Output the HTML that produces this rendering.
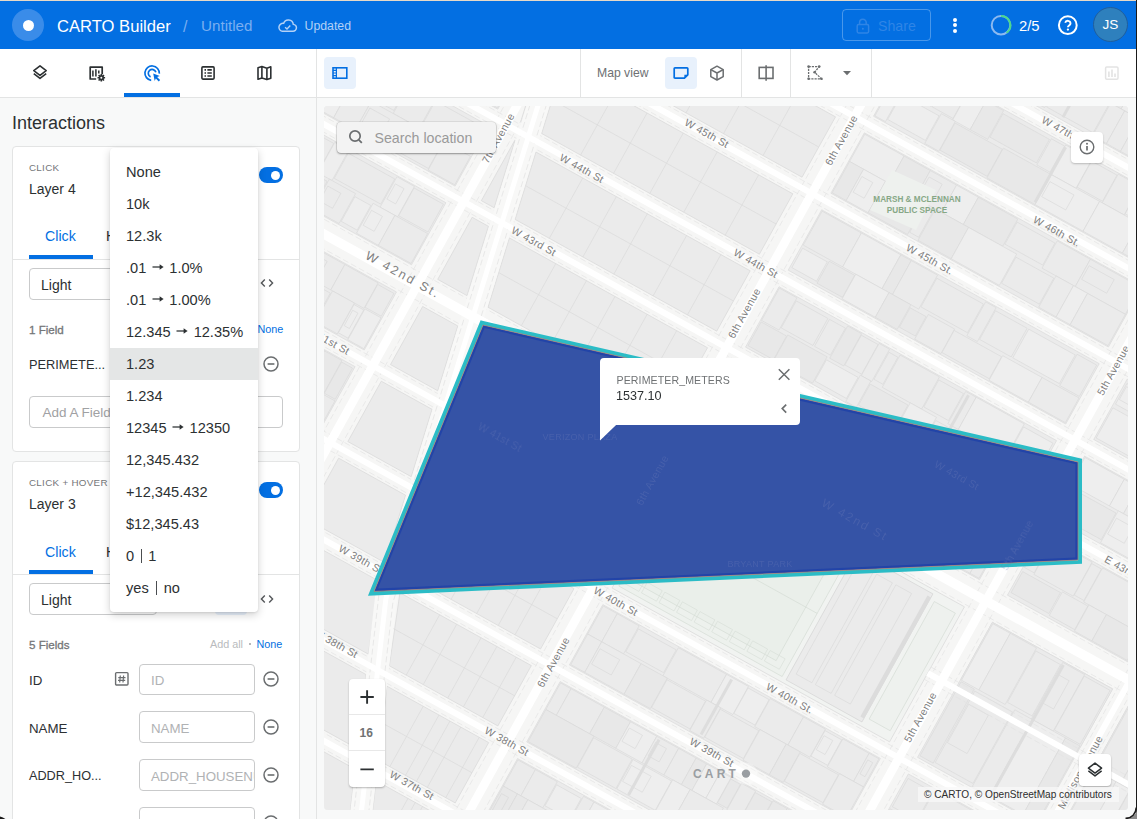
<!DOCTYPE html>
<html><head><meta charset="utf-8">
<style>
*{box-sizing:border-box;margin:0;padding:0}
html,body{width:1137px;height:819px;overflow:hidden;background:#f8f9f9;font-family:"Liberation Sans",sans-serif;color:#2c3032}
.a{position:absolute}
.t{position:absolute;white-space:nowrap;line-height:1}
#hdr{left:0;top:0;width:1137px;height:49px;background:#036fe2;border-top:1px solid #e6d9c8}
#tb{left:0;top:49px;width:1137px;height:49px;background:#fff;border-bottom:1px solid #e3e4e4}
.card{position:absolute;background:#fff;border:1px solid #e3e4e4;border-radius:4px}
.inp{position:absolute;border:1px solid #c9cacb;border-radius:4px;background:#fff}
.menu{position:absolute;left:110px;top:148px;width:148px;height:464px;background:#fff;border-radius:4px;box-shadow:0 3px 8px rgba(0,0,0,.18),0 1px 2px rgba(0,0,0,.08)}
.mi{position:absolute;left:16px;font-size:14.6px;color:#2c3032;line-height:1}
</style></head><body>
<!-- HEADER -->
<div id="hdr" class="a">
  <div class="a" style="left:12px;top:8px;width:32px;height:32px;border-radius:50%;background:#3a8ce9"></div>
  <div class="a" style="left:22.5px;top:18.5px;width:11px;height:11px;border-radius:50%;background:#fff"></div>
  <div class="t" style="left:57px;top:17.5px;font-size:16.6px;color:#fff">CARTO Builder</div>
  <div class="t" style="left:183px;top:18px;font-size:16px;color:#79aef0">/</div>
  <div class="t" style="left:201px;top:17px;font-size:15.2px;color:#79aef0">Untitled</div>
  <svg class="a" style="left:277px;top:18px" width="21" height="14" viewBox="0 0 21 14"><path d="M5.2 12.2h10.6a3.4 3.4 0 0 0 .5-6.8A5 5 0 0 0 6.6 4.4 3.9 3.9 0 0 0 5.2 12.2z" fill="none" stroke="#b3d1f6" stroke-width="1.45"/><path d="M8.1 8.2l1.9 1.8 3.3-3.4" fill="none" stroke="#b3d1f6" stroke-width="1.4"/></svg>
  <div class="t" style="left:304.5px;top:19px;font-size:12.3px;color:#b3d1f6">Updated</div>
  <div class="a" style="left:842px;top:8px;width:89px;height:32px;border:1px solid rgba(255,255,255,.28);border-radius:4px"></div>
  <svg class="a" style="left:856px;top:17px" width="14" height="16" viewBox="0 0 14 16"><rect x="1.2" y="6.6" width="11.4" height="8.4" rx="1.4" fill="none" stroke="#2f85e6" stroke-width="1.5"/><path d="M3.6 6.6V4.6a3.3 3.3 0 0 1 6.6 0v2" fill="none" stroke="#2f85e6" stroke-width="1.5"/><circle cx="6.9" cy="10.8" r="1" fill="#2f85e6"/></svg>
  <div class="t" style="left:878px;top:18px;font-size:14.2px;color:#2f85e6">Share</div>
  <div class="a" style="left:952.6px;top:16.6px;width:4px;height:4px;border-radius:50%;background:#fff"></div>
  <div class="a" style="left:952.6px;top:22.4px;width:4px;height:4px;border-radius:50%;background:#fff"></div>
  <div class="a" style="left:952.6px;top:28.3px;width:4px;height:4px;border-radius:50%;background:#fff"></div>
  <svg class="a" style="left:989px;top:12px" width="24" height="24" viewBox="0 0 24 24"><circle cx="12" cy="12.2" r="9.3" fill="none" stroke="#8cb9f0" stroke-width="2"/><path d="M12 2.9A9.3 9.3 0 0 1 17.5 19.7" fill="none" stroke="#4cd88c" stroke-width="2"/></svg>
  <div class="t" style="left:1019px;top:18px;font-size:14.8px;color:#fff">2/5</div>
  <svg class="a" style="left:1056px;top:12px" width="24" height="24" viewBox="0 0 24 24"><circle cx="11.8" cy="12.2" r="8.9" fill="none" stroke="#fff" stroke-width="2"/><path d="M9.2 9.8a2.7 2.7 0 0 1 5.3.7c0 1.8-2.6 2.2-2.6 3.7" fill="none" stroke="#fff" stroke-width="1.9"/><circle cx="11.9" cy="16.6" r="1.15" fill="#fff"/></svg>
  <div class="a" style="left:1092.5px;top:6px;width:35px;height:35px;border-radius:50%;background:#2e80bd;border:1px solid #1f5e9d"></div>
  <div class="t" style="left:1102.5px;top:16.5px;font-size:13.6px;color:#fff">JS</div>
</div>
<!-- TOOLBAR -->
<div id="tb" class="a"></div>
<div class="a" style="left:124px;top:93px;width:56px;height:4px;background:#036fe2"></div>
<div class="a" style="left:316px;top:49px;width:1px;height:770px;background:#e3e4e4"></div>
<svg class="a" style="left:0;top:49px" width="316" height="44" viewBox="0 49 316 44">
 <g fill="none" stroke="#2c3032" stroke-width="1.6" stroke-linejoin="round">
  <path d="M40 65.8l6.2 4.8-6.2 4.8-6.2-4.8z"/><path d="M33.8 73.6l6.2 4.8 6.2-4.8"/>
  <path d="M96.2 79H90.2V67.1h12v7.2" stroke-width="1.7"/><path d="M92.9 70.5v6M95.9 69.3v7.2M98.8 70.5v3" stroke-width="1.5"/>
  <rect x="201.9" y="66.9" width="12.2" height="12.2" rx="1" stroke-width="1.6"/>
  <path d="M204.5 69.9h1.5M204.5 73h1.5M204.5 76h1.5M207.4 69.9h4.4M207.4 73h4.4M207.4 76h4.4" stroke-width="1.7" stroke-linejoin="miter"/>
  <path d="M258 67.8l3.9-1.2 5 1.6 3.9-1.4v11.4l-3.9 1.4-5-1.6-3.9 1.3z M261.9 66.6v11.6 M266.9 68.2v11.4" stroke-width="1.6"/>
 </g>
 <g fill="#2c3032"><circle cx="101.3" cy="77.8" r="2.6"/></g>
 <g stroke="#2c3032" stroke-width="1.6"><path d="M101.3 74v7.6M97.5 77.8h7.6M98.6 75.1l5.4 5.4M104 75.1l-5.4 5.4"/></g>
 <circle cx="101.3" cy="77.8" r="1" fill="#fff"/>
 <g fill="none" stroke="#036fe2" stroke-width="1.7">
  <path d="M151.2 80.3A7.2 7.2 0 1 1 159.3 73.6"/>
  <path d="M150.6 76.9A3.9 3.9 0 1 1 155.9 72.2"/>
 </g>
 <path d="M153.2 73.4l6.6 2.6-2.7 1.1 3 3-1.3 1.3-3-3-1.1 2.7z" fill="#036fe2"/>
</svg>
<div class="a" style="left:324px;top:57px;width:32px;height:32px;border-radius:4px;background:#e8f1fc"></div>
<svg class="a" style="left:330px;top:64px" width="20" height="18" viewBox="330 64 20 18"><rect x="333" y="67.8" width="13.8" height="10.4" fill="none" stroke="#036fe2" stroke-width="1.6"/><path d="M336.4 67.8v10.4" stroke="#036fe2" stroke-width="1.2"/><path d="M333 70.4h3.4M333 73h3.4M333 75.6h3.4" stroke="#036fe2" stroke-width="1.1"/></svg>
<div class="a" style="left:580px;top:49px;width:1px;height:48px;background:#e3e4e4"></div>
<div class="t" style="left:597px;top:67px;font-size:12.2px;color:#6e7173">Map view</div>
<div class="a" style="left:665px;top:57px;width:32px;height:32px;border-radius:4px;background:#e8f1fc"></div>
<svg class="a" style="left:660px;top:56px" width="80" height="34" viewBox="660 56 80 34">
 <path d="M674.2 68.6a.8.8 0 0 1 .8-.8h12a.8.8 0 0 1 .8.8v6.2l-3.4 3.4H675a.8.8 0 0 1-.8-.8z" fill="none" stroke="#036fe2" stroke-width="1.7" stroke-linejoin="round"/>
 <path d="M684.4 78.2v-3.4h3.4z" fill="#036fe2"/>
 <g fill="none" stroke="#6b6e70" stroke-width="1.5" stroke-linejoin="round"><path d="M717 66.2l6.2 3.4v7l-6.2 3.4-6.2-3.4v-7z"/><path d="M710.8 69.6l6.2 3.4 6.2-3.4M717 73v6.9"/></g>
</svg>
<div class="a" style="left:741px;top:49px;width:1px;height:48px;background:#e3e4e4"></div>
<svg class="a" style="left:750px;top:56px" width="120" height="34" viewBox="750 56 120 34">
 <g fill="none" stroke="#6b6e70" stroke-width="1.6"><rect x="759.2" y="67.4" width="13.8" height="11"/><path d="M766.1 65.3v15.4"/></g>
 <g fill="none" stroke="#6b6e70" stroke-width="1.3" stroke-dasharray="2.2 1"><path d="M808.6 66.6h10.6L814.6 72.2l6.8 6.6H808.6z"/></g>
 <g fill="#6b6e70"><circle cx="808.6" cy="66.6" r="1.3"/><circle cx="819.2" cy="66.6" r="1.3"/><circle cx="814.6" cy="72.2" r="1.3"/><circle cx="821.4" cy="78.8" r="1.3"/><circle cx="808.6" cy="78.8" r="1.3"/></g>
 <path d="M843 71h8l-4 4.2z" fill="#6b6e70"/>
</svg>
<div class="a" style="left:790px;top:49px;width:1px;height:48px;background:#e3e4e4"></div>
<div class="a" style="left:871px;top:49px;width:1px;height:48px;background:#e3e4e4"></div>
<svg class="a" style="left:1100px;top:62px" width="24" height="22" viewBox="1100 62 24 22"><rect x="1105.6" y="66.9" width="12.4" height="12.4" rx="1.2" fill="none" stroke="#e3e3e3" stroke-width="1.5"/><path d="M1108.9 71.4v5.5M1112 69.6v7.3M1115 73.6v3.3" stroke="#e3e3e3" stroke-width="1.6"/></svg>
<div class="a" style="left:1136px;top:0;width:1px;height:819px;background:#1a1a1a"></div>
<!-- SIDEBAR -->
<div class="t" style="left:12px;top:114px;font-size:18px;color:#2c3032">Interactions</div>
<div class="card" style="left:12px;top:146px;width:288px;height:306px"></div>
<div class="t" style="left:29px;top:163px;font-size:9.8px;letter-spacing:.3px;color:#747678">CLICK</div>
<div class="t" style="left:29px;top:181.5px;font-size:14px;color:#2c3032">Layer 4</div>
<div class="a" style="left:259px;top:167px;width:24px;height:16px;border-radius:8px;background:#036fe2"></div><div class="a" style="left:270.5px;top:170.5px;width:9px;height:9px;border-radius:50%;background:#fff"></div>
<div class="t" style="left:45px;top:229px;font-size:14.2px;color:#036fe2">Click</div>
<div class="t" style="left:106px;top:229px;font-size:14.2px;color:#2c3032">Hover</div>
<div class="a" style="left:29px;top:255px;width:64px;height:4px;background:#036fe2"></div>
<div class="a" style="left:13px;top:259px;width:286px;height:1px;background:#e3e4e4"></div>
<div class="inp" style="left:29px;top:268px;width:128px;height:32px"></div>
<div class="t" style="left:41px;top:277.8px;font-size:14px;color:#2c3032">Light</div>
<div class="a" style="left:215px;top:268px;width:32px;height:31px;border-radius:4px;background:#e8f1fc"></div>
<svg class="a" style="left:258px;top:274px" width="18" height="18" viewBox="0 0 18 18"><path d="M6.8 5.4L3.4 9l3.4 3.6M11.2 5.4L14.6 9l-3.4 3.6" fill="none" stroke="#55585b" stroke-width="1.4"/></svg>
<div class="t" style="left:29px;top:323.5px;font-size:11.6px;color:#747678;-webkit-text-stroke:.3px #747678">1 Field</div>
<div class="t" style="left:257.5px;top:323.5px;font-size:10.8px;color:#036fe2">None</div>
<div class="t" style="left:29px;top:358.5px;font-size:12.8px;color:#2c3032">PERIMETE...</div>
<svg class="a" style="left:262px;top:355px" width="18" height="18" viewBox="0 0 18 18"><circle cx="9" cy="9" r="7" fill="none" stroke="#6b6e70" stroke-width="1.5"/><path d="M5.6 9h6.8" stroke="#6b6e70" stroke-width="1.6"/></svg>
<div class="inp" style="left:29px;top:396px;width:254px;height:31.5px"></div>
<div class="t" style="left:42.5px;top:405.5px;font-size:13.5px;color:#9fa1a3">Add A Field</div>

<div class="card" style="left:12px;top:461px;width:288px;height:400px"></div>
<div class="t" style="left:29px;top:478px;font-size:9.8px;letter-spacing:.3px;color:#747678">CLICK + HOVER</div>
<div class="t" style="left:29px;top:496.5px;font-size:14px;color:#2c3032">Layer 3</div>
<div class="a" style="left:259px;top:482px;width:24px;height:16px;border-radius:8px;background:#036fe2"></div><div class="a" style="left:270.5px;top:485.5px;width:9px;height:9px;border-radius:50%;background:#fff"></div>
<div class="t" style="left:45px;top:544.5px;font-size:14.2px;color:#036fe2">Click</div>
<div class="t" style="left:106px;top:544.5px;font-size:14.2px;color:#2c3032">Hover</div>
<div class="a" style="left:29px;top:570px;width:64px;height:4px;background:#036fe2"></div>
<div class="a" style="left:13px;top:574px;width:286px;height:1px;background:#e3e4e4"></div>
<div class="inp" style="left:29px;top:583px;width:128px;height:32px"></div>
<div class="t" style="left:41px;top:592.8px;font-size:14px;color:#2c3032">Light</div>
<div class="a" style="left:215px;top:583px;width:32px;height:32px;border-radius:4px;background:#e8f1fc"></div>
<svg class="a" style="left:258px;top:589.5px" width="18" height="18" viewBox="0 0 18 18"><path d="M6.8 5.4L3.4 9l3.4 3.6M11.2 5.4L14.6 9l-3.4 3.6" fill="none" stroke="#55585b" stroke-width="1.4"/></svg>
<div class="t" style="left:29px;top:638.5px;font-size:11.6px;color:#747678;-webkit-text-stroke:.3px #747678">5 Fields</div>
<div class="t" style="left:210px;top:638.5px;font-size:10.8px;color:#b9bbbd">Add all</div>
<div class="a" style="left:249.3px;top:643px;width:2px;height:2px;border-radius:1px;background:#9fa1a3"></div>
<div class="t" style="left:256.5px;top:638.5px;font-size:10.8px;color:#036fe2">None</div>
<div class="t" style="left:29px;top:674px;font-size:13.3px;color:#2c3032">ID</div>
<svg class="a" style="left:113px;top:670px" width="18" height="18" viewBox="0 0 18 18"><rect x="2.6" y="2.6" width="12.4" height="12.4" rx="1" fill="none" stroke="#6b6e70" stroke-width="1.4"/><path d="M7.3 5.5l-.6 7M10.6 5.5l-.6 7M5.3 7.7h7.2M5 10.4h7.2" stroke="#6b6e70" stroke-width="1.2"/></svg>
<div class="inp" style="left:139px;top:663.5px;width:116px;height:31px"></div>
<div class="t" style="left:151px;top:673.5px;font-size:13.3px;color:#b0b2b4">ID</div>
<svg class="a" style="left:262px;top:670px" width="18" height="18" viewBox="0 0 18 18"><circle cx="9" cy="9" r="7" fill="none" stroke="#6b6e70" stroke-width="1.5"/><path d="M5.6 9h6.8" stroke="#6b6e70" stroke-width="1.6"/></svg>
<div class="t" style="left:29px;top:722px;font-size:13.3px;color:#2c3032">NAME</div>
<div class="inp" style="left:139px;top:711px;width:116px;height:32px"></div>
<div class="t" style="left:151px;top:721.5px;font-size:13.3px;color:#b0b2b4">NAME</div>
<svg class="a" style="left:262px;top:718px" width="18" height="18" viewBox="0 0 18 18"><circle cx="9" cy="9" r="7" fill="none" stroke="#6b6e70" stroke-width="1.5"/><path d="M5.6 9h6.8" stroke="#6b6e70" stroke-width="1.6"/></svg>
<div class="t" style="left:29px;top:770px;font-size:12.7px;color:#2c3032">ADDR_HO...</div>
<div class="inp" style="left:139px;top:759px;width:116px;height:32px;overflow:hidden"><div class="t" style="left:11px;top:10px;font-size:13.3px;color:#b0b2b4">ADDR_HOUSENUMBER</div></div>
<svg class="a" style="left:262px;top:766px" width="18" height="18" viewBox="0 0 18 18"><circle cx="9" cy="9" r="7" fill="none" stroke="#6b6e70" stroke-width="1.5"/><path d="M5.6 9h6.8" stroke="#6b6e70" stroke-width="1.6"/></svg>
<div class="t" style="left:29px;top:818px;font-size:12.7px;color:#2c3032">ADDR_ST...</div>
<div class="inp" style="left:139px;top:807px;width:116px;height:32px;overflow:hidden"><div class="t" style="left:11px;top:10px;font-size:13.3px;color:#b0b2b4">ADDR_STREET</div></div>
<svg class="a" style="left:262px;top:814px" width="18" height="18" viewBox="0 0 18 18"><circle cx="9" cy="9" r="7" fill="none" stroke="#6b6e70" stroke-width="1.5"/><path d="M5.6 9h6.8" stroke="#6b6e70" stroke-width="1.6"/></svg>

<!-- MAP -->
<div id="map" class="a" style="left:324px;top:106px;width:804px;height:704px;border-radius:4px;background:#ebebeb;overflow:hidden">
<svg class="a" style="left:0;top:0" width="804" height="704" viewBox="324 106 804 704">
<g transform="translate(680.0,431.4) rotate(29)">
<rect x="-900" y="-900" width="1800" height="1800" fill="#f6f6f5"/>
<rect x="-584.0" y="-526.5" width="268.4" height="69.0" fill="#ebebeb" stroke="#dcdcdc" stroke-width="0.7"/>
<rect x="-582.1" y="-522.5" width="53.2" height="27.0" fill="#e8e8e8" stroke="#d9d9d9" stroke-width="0.6"/>
<rect x="-527.1" y="-522.5" width="23.2" height="27.0" fill="#ebebeb" stroke="#d9d9d9" stroke-width="0.6"/>
<rect x="-502.6" y="-524.0" width="19.1" height="30.0" fill="#ebebeb" stroke="#d9d9d9" stroke-width="0.6"/>
<rect x="-483.0" y="-525.5" width="16.0" height="33.0" fill="#eeeeee" stroke="#d9d9d9" stroke-width="0.6"/>
<rect x="-466.1" y="-522.5" width="43.2" height="27.0" fill="#e8e8e8" stroke="#d9d9d9" stroke-width="0.6"/>
<rect x="-422.0" y="-525.5" width="12.0" height="33.0" fill="#eeeeee" stroke="#d9d9d9" stroke-width="0.6"/>
<rect x="-420.0" y="-518.9" width="6.0" height="16.5" fill="none" stroke="#d6d6d6" stroke-width="0.5"/>
<rect x="-409.1" y="-522.5" width="23.2" height="27.0" fill="#ebebeb" stroke="#d9d9d9" stroke-width="0.6"/>
<rect x="-408.0" y="-518.9" width="12.5" height="16.5" fill="none" stroke="#d6d6d6" stroke-width="0.5"/>
<rect x="-384.6" y="-524.0" width="54.1" height="30.0" fill="#ebebeb" stroke="#d9d9d9" stroke-width="0.6"/>
<rect x="-330.0" y="-525.5" width="13.4" height="33.0" fill="#eeeeee" stroke="#d9d9d9" stroke-width="0.6"/>
<rect x="-583.0" y="-492.5" width="55.0" height="34.0" fill="#ebebeb" stroke="#d9d9d9" stroke-width="0.6"/>
<rect x="-527.1" y="-489.5" width="28.2" height="28.0" fill="#e8e8e8" stroke="#d9d9d9" stroke-width="0.6"/>
<rect x="-498.0" y="-492.5" width="16.0" height="34.0" fill="#ebebeb" stroke="#d9d9d9" stroke-width="0.6"/>
<rect x="-482.0" y="-492.5" width="30.0" height="34.0" fill="#ebebeb" stroke="#d9d9d9" stroke-width="0.6"/>
<rect x="-452.0" y="-492.5" width="16.0" height="34.0" fill="#e8e8e8" stroke="#d9d9d9" stroke-width="0.6"/>
<rect x="-436.0" y="-492.5" width="45.0" height="34.0" fill="#ebebeb" stroke="#d9d9d9" stroke-width="0.6"/>
<rect x="-391.0" y="-492.5" width="12.0" height="34.0" fill="#ebebeb" stroke="#d9d9d9" stroke-width="0.6"/>
<rect x="-378.6" y="-491.0" width="11.1" height="31.0" fill="#e8e8e8" stroke="#d9d9d9" stroke-width="0.6"/>
<rect x="-367.0" y="-492.5" width="50.4" height="34.0" fill="#e8e8e8" stroke="#d9d9d9" stroke-width="0.6"/>
<rect x="-421.6" y="-523.5" width="3.0" height="63.0" fill="#dddddd" stroke="none" stroke-width="0.7"/>
<polygon points="-285.6,-526.5 -359.4,-526.5 -344.9,-457.5 -285.6,-457.5" fill="#ebebeb" stroke="#dadada" stroke-width=".7"/>
<polygon points="-335.4,-526.5 -16.5,-526.5 -16.5,-457.5 -320.9,-457.5" fill="#ebebeb" stroke="#dadada" stroke-width=".7"/>
<path d="M-271.8 -526.5V-457.5" stroke="#d9d9d9" stroke-width=".6"/>
<path d="M-221.3 -526.5V-457.5" stroke="#d9d9d9" stroke-width=".6"/>
<path d="M-173.5 -526.5V-457.5" stroke="#d9d9d9" stroke-width=".6"/>
<path d="M-118.9 -526.5V-457.5" stroke="#d9d9d9" stroke-width=".6"/>
<path d="M-63.0 -526.5V-457.5" stroke="#d9d9d9" stroke-width=".6"/>
<path d="M-327.4 -492.0H-16.5" stroke="#d9d9d9" stroke-width=".6"/>
<rect x="16.5" y="-526.5" width="317.3" height="69.0" fill="#ebebeb" stroke="#dcdcdc" stroke-width="0.7"/>
<rect x="17.5" y="-525.5" width="16.0" height="29.6" fill="#ebebeb" stroke="#d9d9d9" stroke-width="0.6"/>
<rect x="34.4" y="-522.5" width="53.2" height="23.6" fill="#ebebeb" stroke="#d9d9d9" stroke-width="0.6"/>
<rect x="89.0" y="-524.0" width="24.1" height="26.6" fill="#ebebeb" stroke="#d9d9d9" stroke-width="0.6"/>
<rect x="114.0" y="-524.0" width="15.1" height="26.6" fill="#e8e8e8" stroke="#d9d9d9" stroke-width="0.6"/>
<rect x="130.4" y="-522.5" width="10.2" height="23.6" fill="#ebebeb" stroke="#d9d9d9" stroke-width="0.6"/>
<rect x="141.5" y="-525.5" width="12.0" height="29.6" fill="#ebebeb" stroke="#d9d9d9" stroke-width="0.6"/>
<rect x="153.5" y="-525.5" width="16.0" height="29.6" fill="#ebebeb" stroke="#d9d9d9" stroke-width="0.6"/>
<rect x="170.4" y="-522.5" width="28.2" height="23.6" fill="#ebebeb" stroke="#d9d9d9" stroke-width="0.6"/>
<rect x="199.5" y="-525.5" width="30.0" height="29.6" fill="#e8e8e8" stroke="#d9d9d9" stroke-width="0.6"/>
<rect x="201.5" y="-519.6" width="15.0" height="14.8" fill="none" stroke="#d6d6d6" stroke-width="0.5"/>
<rect x="229.5" y="-525.5" width="25.0" height="29.6" fill="#eeeeee" stroke="#d9d9d9" stroke-width="0.6"/>
<rect x="231.5" y="-519.6" width="12.5" height="14.8" fill="none" stroke="#d6d6d6" stroke-width="0.5"/>
<rect x="255.4" y="-522.5" width="36.2" height="23.6" fill="#ebebeb" stroke="#d9d9d9" stroke-width="0.6"/>
<rect x="292.5" y="-525.5" width="40.3" height="29.6" fill="#eeeeee" stroke="#d9d9d9" stroke-width="0.6"/>
<rect x="17.5" y="-495.9" width="20.0" height="37.4" fill="#ebebeb" stroke="#d9d9d9" stroke-width="0.6"/>
<rect x="37.5" y="-495.9" width="25.0" height="37.4" fill="#ebebeb" stroke="#d9d9d9" stroke-width="0.6"/>
<rect x="63.0" y="-494.4" width="24.1" height="34.4" fill="#e8e8e8" stroke="#d9d9d9" stroke-width="0.6"/>
<rect x="87.5" y="-495.9" width="45.0" height="37.4" fill="#ebebeb" stroke="#d9d9d9" stroke-width="0.6"/>
<rect x="89.5" y="-488.4" width="22.5" height="18.7" fill="none" stroke="#d6d6d6" stroke-width="0.5"/>
<rect x="132.9" y="-494.4" width="29.1" height="34.4" fill="#ebebeb" stroke="#d9d9d9" stroke-width="0.6"/>
<rect x="163.4" y="-492.9" width="53.2" height="31.4" fill="#ebebeb" stroke="#d9d9d9" stroke-width="0.6"/>
<rect x="217.5" y="-495.9" width="16.0" height="37.4" fill="#ebebeb" stroke="#d9d9d9" stroke-width="0.6"/>
<rect x="233.5" y="-495.9" width="16.0" height="37.4" fill="#ebebeb" stroke="#d9d9d9" stroke-width="0.6"/>
<rect x="249.5" y="-495.9" width="25.0" height="37.4" fill="#ebebeb" stroke="#d9d9d9" stroke-width="0.6"/>
<rect x="274.5" y="-495.9" width="58.3" height="37.4" fill="#ebebeb" stroke="#d9d9d9" stroke-width="0.6"/>
<rect x="276.5" y="-488.4" width="29.2" height="18.7" fill="none" stroke="#d6d6d6" stroke-width="0.5"/>
<rect x="181.1" y="-523.5" width="3.0" height="63.0" fill="#dddddd" stroke="none" stroke-width="0.7"/>
<rect x="365.8" y="-526.5" width="137.4" height="69.0" fill="#ebebeb" stroke="#dcdcdc" stroke-width="0.7"/>
<rect x="366.8" y="-525.5" width="16.0" height="38.6" fill="#ebebeb" stroke="#d9d9d9" stroke-width="0.6"/>
<rect x="383.7" y="-522.5" width="36.2" height="32.6" fill="#eeeeee" stroke="#d9d9d9" stroke-width="0.6"/>
<rect x="421.2" y="-524.0" width="11.1" height="35.6" fill="#ebebeb" stroke="#d9d9d9" stroke-width="0.6"/>
<rect x="432.8" y="-525.5" width="30.0" height="38.6" fill="#ebebeb" stroke="#d9d9d9" stroke-width="0.6"/>
<rect x="462.8" y="-525.5" width="16.0" height="38.6" fill="#e8e8e8" stroke="#d9d9d9" stroke-width="0.6"/>
<rect x="478.8" y="-525.5" width="23.4" height="38.6" fill="#ebebeb" stroke="#d9d9d9" stroke-width="0.6"/>
<rect x="480.8" y="-517.8" width="11.7" height="19.3" fill="none" stroke="#d6d6d6" stroke-width="0.5"/>
<rect x="366.8" y="-486.9" width="38.0" height="28.4" fill="#ebebeb" stroke="#d9d9d9" stroke-width="0.6"/>
<rect x="404.8" y="-486.9" width="38.0" height="28.4" fill="#ebebeb" stroke="#d9d9d9" stroke-width="0.6"/>
<rect x="442.8" y="-486.9" width="16.0" height="28.4" fill="#e8e8e8" stroke="#d9d9d9" stroke-width="0.6"/>
<rect x="459.2" y="-485.4" width="11.1" height="25.4" fill="#eeeeee" stroke="#d9d9d9" stroke-width="0.6"/>
<rect x="470.8" y="-486.9" width="12.0" height="28.4" fill="#eeeeee" stroke="#d9d9d9" stroke-width="0.6"/>
<rect x="472.8" y="-481.2" width="6.0" height="14.2" fill="none" stroke="#d6d6d6" stroke-width="0.5"/>
<rect x="483.2" y="-485.4" width="18.5" height="25.4" fill="#ebebeb" stroke="#d9d9d9" stroke-width="0.6"/>
<rect x="453.9" y="-523.5" width="3.0" height="63.0" fill="#dddddd" stroke="none" stroke-width="0.7"/>
<rect x="525.2" y="-526.5" width="140.8" height="69.0" fill="#ebebeb" stroke="#dcdcdc" stroke-width="0.7"/>
<rect x="527.1" y="-522.5" width="53.2" height="28.4" fill="#e8e8e8" stroke="#d9d9d9" stroke-width="0.6"/>
<rect x="528.2" y="-518.6" width="27.5" height="17.2" fill="none" stroke="#d6d6d6" stroke-width="0.5"/>
<rect x="582.1" y="-522.5" width="10.2" height="28.4" fill="#ebebeb" stroke="#d9d9d9" stroke-width="0.6"/>
<rect x="583.2" y="-518.6" width="6.0" height="17.2" fill="none" stroke="#d6d6d6" stroke-width="0.5"/>
<rect x="593.2" y="-525.5" width="12.0" height="34.4" fill="#ebebeb" stroke="#d9d9d9" stroke-width="0.6"/>
<rect x="605.2" y="-525.5" width="59.8" height="34.4" fill="#ebebeb" stroke="#d9d9d9" stroke-width="0.6"/>
<rect x="526.2" y="-491.1" width="20.0" height="32.6" fill="#eeeeee" stroke="#d9d9d9" stroke-width="0.6"/>
<rect x="546.7" y="-489.6" width="37.1" height="29.6" fill="#e8e8e8" stroke="#d9d9d9" stroke-width="0.6"/>
<rect x="584.2" y="-491.1" width="38.0" height="32.6" fill="#e8e8e8" stroke="#d9d9d9" stroke-width="0.6"/>
<rect x="622.2" y="-491.1" width="42.8" height="32.6" fill="#ebebeb" stroke="#d9d9d9" stroke-width="0.6"/>
<rect x="-584.0" y="-438.5" width="268.4" height="69.0" fill="#ebebeb" stroke="#dcdcdc" stroke-width="0.7"/>
<rect x="-582.5" y="-436.0" width="19.1" height="28.5" fill="#ebebeb" stroke="#d9d9d9" stroke-width="0.6"/>
<rect x="-563.0" y="-437.5" width="12.0" height="31.5" fill="#ebebeb" stroke="#d9d9d9" stroke-width="0.6"/>
<rect x="-550.5" y="-436.0" width="15.1" height="28.5" fill="#e8e8e8" stroke="#d9d9d9" stroke-width="0.6"/>
<rect x="-534.5" y="-436.0" width="24.1" height="28.5" fill="#e8e8e8" stroke="#d9d9d9" stroke-width="0.6"/>
<rect x="-509.1" y="-434.5" width="53.2" height="25.5" fill="#ebebeb" stroke="#d9d9d9" stroke-width="0.6"/>
<rect x="-455.0" y="-437.5" width="16.0" height="31.5" fill="#ebebeb" stroke="#d9d9d9" stroke-width="0.6"/>
<rect x="-438.1" y="-434.5" width="10.2" height="25.5" fill="#ebebeb" stroke="#d9d9d9" stroke-width="0.6"/>
<rect x="-426.6" y="-436.0" width="11.1" height="28.5" fill="#ebebeb" stroke="#d9d9d9" stroke-width="0.6"/>
<rect x="-415.0" y="-437.5" width="12.0" height="31.5" fill="#ebebeb" stroke="#d9d9d9" stroke-width="0.6"/>
<rect x="-402.6" y="-436.0" width="11.1" height="28.5" fill="#ebebeb" stroke="#d9d9d9" stroke-width="0.6"/>
<rect x="-401.0" y="-431.2" width="6.0" height="15.8" fill="none" stroke="#d6d6d6" stroke-width="0.5"/>
<rect x="-391.0" y="-437.5" width="38.0" height="31.5" fill="#ebebeb" stroke="#d9d9d9" stroke-width="0.6"/>
<rect x="-353.0" y="-437.5" width="36.4" height="31.5" fill="#ebebeb" stroke="#d9d9d9" stroke-width="0.6"/>
<rect x="-583.0" y="-406.0" width="55.0" height="35.5" fill="#eeeeee" stroke="#d9d9d9" stroke-width="0.6"/>
<rect x="-527.1" y="-403.0" width="28.2" height="29.5" fill="#ebebeb" stroke="#d9d9d9" stroke-width="0.6"/>
<rect x="-498.0" y="-406.0" width="20.0" height="35.5" fill="#e8e8e8" stroke="#d9d9d9" stroke-width="0.6"/>
<rect x="-496.0" y="-398.9" width="10.0" height="17.7" fill="none" stroke="#d6d6d6" stroke-width="0.5"/>
<rect x="-477.6" y="-404.5" width="44.1" height="32.5" fill="#ebebeb" stroke="#d9d9d9" stroke-width="0.6"/>
<rect x="-432.1" y="-403.0" width="10.2" height="29.5" fill="#e8e8e8" stroke="#d9d9d9" stroke-width="0.6"/>
<rect x="-421.0" y="-406.0" width="38.0" height="35.5" fill="#e8e8e8" stroke="#d9d9d9" stroke-width="0.6"/>
<rect x="-383.0" y="-406.0" width="25.0" height="35.5" fill="#ebebeb" stroke="#d9d9d9" stroke-width="0.6"/>
<rect x="-358.0" y="-406.0" width="41.4" height="35.5" fill="#ebebeb" stroke="#d9d9d9" stroke-width="0.6"/>
<polygon points="-285.6,-438.5 -340.9,-438.5 -326.4,-369.5 -285.6,-369.5" fill="#ebebeb" stroke="#dadada" stroke-width=".7"/>
<polygon points="-316.9,-438.5 -16.5,-438.5 -16.5,-369.5 -302.4,-369.5" fill="#ebebeb" stroke="#dadada" stroke-width=".7"/>
<path d="M-256.5 -438.5V-369.5" stroke="#d9d9d9" stroke-width=".6"/>
<path d="M-203.0 -438.5V-369.5" stroke="#d9d9d9" stroke-width=".6"/>
<path d="M-155.9 -438.5V-369.5" stroke="#d9d9d9" stroke-width=".6"/>
<path d="M-113.3 -438.5V-369.5" stroke="#d9d9d9" stroke-width=".6"/>
<path d="M-68.3 -438.5V-369.5" stroke="#d9d9d9" stroke-width=".6"/>
<path d="M-308.9 -404.0H-16.5" stroke="#d9d9d9" stroke-width=".6"/>
<rect x="16.5" y="-438.5" width="317.3" height="69.0" fill="#ebebeb" stroke="#dcdcdc" stroke-width="0.7"/>
<rect x="17.9" y="-436.0" width="44.1" height="29.9" fill="#ebebeb" stroke="#d9d9d9" stroke-width="0.6"/>
<rect x="63.0" y="-436.0" width="24.1" height="29.9" fill="#ebebeb" stroke="#d9d9d9" stroke-width="0.6"/>
<rect x="87.5" y="-437.5" width="20.0" height="32.9" fill="#eeeeee" stroke="#d9d9d9" stroke-width="0.6"/>
<rect x="107.5" y="-437.5" width="20.0" height="32.9" fill="#e8e8e8" stroke="#d9d9d9" stroke-width="0.6"/>
<rect x="128.4" y="-434.5" width="53.2" height="26.9" fill="#e8e8e8" stroke="#d9d9d9" stroke-width="0.6"/>
<rect x="182.9" y="-436.0" width="15.1" height="29.9" fill="#ebebeb" stroke="#d9d9d9" stroke-width="0.6"/>
<rect x="198.5" y="-437.5" width="30.0" height="32.9" fill="#eeeeee" stroke="#d9d9d9" stroke-width="0.6"/>
<rect x="228.9" y="-436.0" width="29.1" height="29.9" fill="#ebebeb" stroke="#d9d9d9" stroke-width="0.6"/>
<rect x="258.5" y="-437.5" width="25.0" height="32.9" fill="#ebebeb" stroke="#d9d9d9" stroke-width="0.6"/>
<rect x="283.9" y="-436.0" width="29.1" height="29.9" fill="#eeeeee" stroke="#d9d9d9" stroke-width="0.6"/>
<rect x="313.5" y="-437.5" width="19.3" height="32.9" fill="#eeeeee" stroke="#d9d9d9" stroke-width="0.6"/>
<rect x="17.5" y="-404.6" width="12.0" height="34.1" fill="#eeeeee" stroke="#d9d9d9" stroke-width="0.6"/>
<rect x="30.4" y="-401.6" width="43.2" height="28.1" fill="#eeeeee" stroke="#d9d9d9" stroke-width="0.6"/>
<rect x="74.5" y="-404.6" width="16.0" height="34.1" fill="#ebebeb" stroke="#d9d9d9" stroke-width="0.6"/>
<rect x="91.0" y="-403.1" width="54.1" height="31.1" fill="#e8e8e8" stroke="#d9d9d9" stroke-width="0.6"/>
<rect x="145.5" y="-404.6" width="55.0" height="34.1" fill="#e8e8e8" stroke="#d9d9d9" stroke-width="0.6"/>
<rect x="200.5" y="-404.6" width="55.0" height="34.1" fill="#eeeeee" stroke="#d9d9d9" stroke-width="0.6"/>
<rect x="202.5" y="-397.8" width="27.5" height="17.1" fill="none" stroke="#d6d6d6" stroke-width="0.5"/>
<rect x="255.5" y="-404.6" width="45.0" height="34.1" fill="#eeeeee" stroke="#d9d9d9" stroke-width="0.6"/>
<rect x="300.5" y="-404.6" width="20.0" height="34.1" fill="#ebebeb" stroke="#d9d9d9" stroke-width="0.6"/>
<rect x="320.5" y="-404.6" width="12.3" height="34.1" fill="#ebebeb" stroke="#d9d9d9" stroke-width="0.6"/>
<rect x="198.0" y="-435.5" width="3.0" height="63.0" fill="#dddddd" stroke="none" stroke-width="0.7"/>
<rect x="365.8" y="-438.5" width="137.4" height="69.0" fill="#ebebeb" stroke="#dcdcdc" stroke-width="0.7"/>
<rect x="367.7" y="-434.5" width="14.2" height="23.3" fill="#eeeeee" stroke="#d9d9d9" stroke-width="0.6"/>
<rect x="383.2" y="-436.0" width="24.1" height="26.3" fill="#eeeeee" stroke="#d9d9d9" stroke-width="0.6"/>
<rect x="384.8" y="-431.6" width="12.5" height="14.6" fill="none" stroke="#d6d6d6" stroke-width="0.5"/>
<rect x="408.7" y="-434.5" width="43.2" height="23.3" fill="#eeeeee" stroke="#d9d9d9" stroke-width="0.6"/>
<rect x="452.8" y="-437.5" width="25.0" height="29.3" fill="#eeeeee" stroke="#d9d9d9" stroke-width="0.6"/>
<rect x="477.8" y="-437.5" width="24.4" height="29.3" fill="#ebebeb" stroke="#d9d9d9" stroke-width="0.6"/>
<rect x="366.8" y="-408.2" width="38.0" height="37.7" fill="#eeeeee" stroke="#d9d9d9" stroke-width="0.6"/>
<rect x="404.8" y="-408.2" width="25.0" height="37.7" fill="#ebebeb" stroke="#d9d9d9" stroke-width="0.6"/>
<rect x="429.8" y="-408.2" width="20.0" height="37.7" fill="#ebebeb" stroke="#d9d9d9" stroke-width="0.6"/>
<rect x="449.8" y="-408.2" width="30.0" height="37.7" fill="#e8e8e8" stroke="#d9d9d9" stroke-width="0.6"/>
<rect x="479.8" y="-408.2" width="22.4" height="37.7" fill="#eeeeee" stroke="#d9d9d9" stroke-width="0.6"/>
<rect x="525.2" y="-438.5" width="140.8" height="69.0" fill="#ebebeb" stroke="#dcdcdc" stroke-width="0.7"/>
<rect x="527.1" y="-434.5" width="14.2" height="30.7" fill="#ebebeb" stroke="#d9d9d9" stroke-width="0.6"/>
<rect x="543.1" y="-434.5" width="36.2" height="30.7" fill="#ebebeb" stroke="#d9d9d9" stroke-width="0.6"/>
<rect x="580.2" y="-437.5" width="38.0" height="36.7" fill="#eeeeee" stroke="#d9d9d9" stroke-width="0.6"/>
<rect x="618.2" y="-437.5" width="46.8" height="36.7" fill="#ebebeb" stroke="#d9d9d9" stroke-width="0.6"/>
<rect x="620.2" y="-430.2" width="23.4" height="18.4" fill="none" stroke="#d6d6d6" stroke-width="0.5"/>
<rect x="526.2" y="-400.8" width="55.0" height="30.3" fill="#ebebeb" stroke="#d9d9d9" stroke-width="0.6"/>
<rect x="581.2" y="-400.8" width="25.0" height="30.3" fill="#ebebeb" stroke="#d9d9d9" stroke-width="0.6"/>
<rect x="606.2" y="-400.8" width="16.0" height="30.3" fill="#eeeeee" stroke="#d9d9d9" stroke-width="0.6"/>
<rect x="622.2" y="-400.8" width="42.8" height="30.3" fill="#ebebeb" stroke="#d9d9d9" stroke-width="0.6"/>
<rect x="596.9" y="-435.5" width="3.0" height="63.0" fill="#dddddd" stroke="none" stroke-width="0.7"/>
<rect x="-584.0" y="-350.5" width="268.4" height="69.0" fill="#ebebeb" stroke="#dcdcdc" stroke-width="0.7"/>
<rect x="-583.0" y="-349.5" width="38.0" height="32.8" fill="#ebebeb" stroke="#d9d9d9" stroke-width="0.6"/>
<rect x="-544.5" y="-348.0" width="19.1" height="29.8" fill="#e8e8e8" stroke="#d9d9d9" stroke-width="0.6"/>
<rect x="-525.0" y="-349.5" width="38.0" height="32.8" fill="#e8e8e8" stroke="#d9d9d9" stroke-width="0.6"/>
<rect x="-487.0" y="-349.5" width="16.0" height="32.8" fill="#eeeeee" stroke="#d9d9d9" stroke-width="0.6"/>
<rect x="-470.1" y="-346.5" width="14.2" height="26.8" fill="#e8e8e8" stroke="#d9d9d9" stroke-width="0.6"/>
<rect x="-455.0" y="-349.5" width="38.0" height="32.8" fill="#ebebeb" stroke="#d9d9d9" stroke-width="0.6"/>
<rect x="-417.0" y="-349.5" width="20.0" height="32.8" fill="#e8e8e8" stroke="#d9d9d9" stroke-width="0.6"/>
<rect x="-397.0" y="-349.5" width="38.0" height="32.8" fill="#e8e8e8" stroke="#d9d9d9" stroke-width="0.6"/>
<rect x="-359.0" y="-349.5" width="20.0" height="32.8" fill="#ebebeb" stroke="#d9d9d9" stroke-width="0.6"/>
<rect x="-339.0" y="-349.5" width="22.4" height="32.8" fill="#ebebeb" stroke="#d9d9d9" stroke-width="0.6"/>
<rect x="-583.0" y="-316.7" width="12.0" height="34.2" fill="#ebebeb" stroke="#d9d9d9" stroke-width="0.6"/>
<rect x="-571.0" y="-316.7" width="30.0" height="34.2" fill="#ebebeb" stroke="#d9d9d9" stroke-width="0.6"/>
<rect x="-541.0" y="-316.7" width="20.0" height="34.2" fill="#eeeeee" stroke="#d9d9d9" stroke-width="0.6"/>
<rect x="-521.0" y="-316.7" width="55.0" height="34.2" fill="#ebebeb" stroke="#d9d9d9" stroke-width="0.6"/>
<rect x="-465.1" y="-313.7" width="10.2" height="28.2" fill="#ebebeb" stroke="#d9d9d9" stroke-width="0.6"/>
<rect x="-464.0" y="-309.9" width="6.0" height="17.1" fill="none" stroke="#d6d6d6" stroke-width="0.5"/>
<rect x="-453.6" y="-315.2" width="24.1" height="31.2" fill="#ebebeb" stroke="#d9d9d9" stroke-width="0.6"/>
<rect x="-428.6" y="-315.2" width="11.1" height="31.2" fill="#ebebeb" stroke="#d9d9d9" stroke-width="0.6"/>
<rect x="-427.0" y="-309.9" width="6.0" height="17.1" fill="none" stroke="#d6d6d6" stroke-width="0.5"/>
<rect x="-417.0" y="-316.7" width="30.0" height="34.2" fill="#ebebeb" stroke="#d9d9d9" stroke-width="0.6"/>
<rect x="-386.1" y="-313.7" width="43.2" height="28.2" fill="#eeeeee" stroke="#d9d9d9" stroke-width="0.6"/>
<rect x="-342.0" y="-316.7" width="16.0" height="34.2" fill="#e8e8e8" stroke="#d9d9d9" stroke-width="0.6"/>
<rect x="-326.0" y="-316.7" width="9.4" height="34.2" fill="#e8e8e8" stroke="#d9d9d9" stroke-width="0.6"/>
<polygon points="-285.6,-350.5 -322.4,-350.5 -307.9,-281.5 -285.6,-281.5" fill="#ebebeb" stroke="#dadada" stroke-width=".7"/>
<polygon points="-298.4,-350.5 -16.5,-350.5 -16.5,-281.5 -283.9,-281.5" fill="#ebebeb" stroke="#dadada" stroke-width=".7"/>
<path d="M-235.8 -350.5V-281.5" stroke="#d9d9d9" stroke-width=".6"/>
<path d="M-194.4 -350.5V-281.5" stroke="#d9d9d9" stroke-width=".6"/>
<path d="M-149.2 -350.5V-281.5" stroke="#d9d9d9" stroke-width=".6"/>
<path d="M-106.3 -350.5V-281.5" stroke="#d9d9d9" stroke-width=".6"/>
<path d="M-61.1 -350.5V-281.5" stroke="#d9d9d9" stroke-width=".6"/>
<path d="M-290.4 -316.0H-16.5" stroke="#d9d9d9" stroke-width=".6"/>
<rect x="16.5" y="-350.5" width="317.3" height="69.0" fill="#ebebeb" stroke="#dcdcdc" stroke-width="0.7"/>
<rect x="17.5" y="-349.5" width="45.0" height="31.2" fill="#eeeeee" stroke="#d9d9d9" stroke-width="0.6"/>
<rect x="62.5" y="-349.5" width="30.0" height="31.2" fill="#e8e8e8" stroke="#d9d9d9" stroke-width="0.6"/>
<rect x="92.5" y="-349.5" width="30.0" height="31.2" fill="#ebebeb" stroke="#d9d9d9" stroke-width="0.6"/>
<rect x="94.5" y="-343.3" width="15.0" height="15.6" fill="none" stroke="#d6d6d6" stroke-width="0.5"/>
<rect x="122.5" y="-349.5" width="25.0" height="31.2" fill="#eeeeee" stroke="#d9d9d9" stroke-width="0.6"/>
<rect x="147.5" y="-349.5" width="45.0" height="31.2" fill="#e8e8e8" stroke="#d9d9d9" stroke-width="0.6"/>
<rect x="193.4" y="-346.5" width="43.2" height="25.2" fill="#ebebeb" stroke="#d9d9d9" stroke-width="0.6"/>
<rect x="237.5" y="-349.5" width="38.0" height="31.2" fill="#ebebeb" stroke="#d9d9d9" stroke-width="0.6"/>
<rect x="275.5" y="-349.5" width="57.3" height="31.2" fill="#ebebeb" stroke="#d9d9d9" stroke-width="0.6"/>
<rect x="277.5" y="-343.3" width="28.7" height="15.6" fill="none" stroke="#d6d6d6" stroke-width="0.5"/>
<rect x="17.5" y="-318.3" width="16.0" height="35.8" fill="#e8e8e8" stroke="#d9d9d9" stroke-width="0.6"/>
<rect x="33.5" y="-318.3" width="25.0" height="35.8" fill="#eeeeee" stroke="#d9d9d9" stroke-width="0.6"/>
<rect x="35.5" y="-311.1" width="12.5" height="17.9" fill="none" stroke="#d6d6d6" stroke-width="0.5"/>
<rect x="58.5" y="-318.3" width="45.0" height="35.8" fill="#e8e8e8" stroke="#d9d9d9" stroke-width="0.6"/>
<rect x="104.4" y="-315.3" width="10.2" height="29.8" fill="#ebebeb" stroke="#d9d9d9" stroke-width="0.6"/>
<rect x="115.5" y="-318.3" width="38.0" height="35.8" fill="#e8e8e8" stroke="#d9d9d9" stroke-width="0.6"/>
<rect x="153.5" y="-318.3" width="55.0" height="35.8" fill="#eeeeee" stroke="#d9d9d9" stroke-width="0.6"/>
<rect x="209.4" y="-315.3" width="43.2" height="29.8" fill="#ebebeb" stroke="#d9d9d9" stroke-width="0.6"/>
<rect x="253.5" y="-318.3" width="20.0" height="35.8" fill="#ebebeb" stroke="#d9d9d9" stroke-width="0.6"/>
<rect x="273.5" y="-318.3" width="16.0" height="35.8" fill="#eeeeee" stroke="#d9d9d9" stroke-width="0.6"/>
<rect x="289.5" y="-318.3" width="43.3" height="35.8" fill="#ebebeb" stroke="#d9d9d9" stroke-width="0.6"/>
<rect x="365.8" y="-350.5" width="137.4" height="69.0" fill="#ebebeb" stroke="#dcdcdc" stroke-width="0.7"/>
<rect x="366.8" y="-349.5" width="25.0" height="35.6" fill="#ebebeb" stroke="#d9d9d9" stroke-width="0.6"/>
<rect x="391.8" y="-349.5" width="25.0" height="35.6" fill="#eeeeee" stroke="#d9d9d9" stroke-width="0.6"/>
<rect x="416.8" y="-349.5" width="12.0" height="35.6" fill="#ebebeb" stroke="#d9d9d9" stroke-width="0.6"/>
<rect x="429.7" y="-346.5" width="43.2" height="29.6" fill="#ebebeb" stroke="#d9d9d9" stroke-width="0.6"/>
<rect x="430.8" y="-342.4" width="22.5" height="17.8" fill="none" stroke="#d6d6d6" stroke-width="0.5"/>
<rect x="473.8" y="-349.5" width="28.4" height="35.6" fill="#eeeeee" stroke="#d9d9d9" stroke-width="0.6"/>
<rect x="475.8" y="-342.4" width="14.2" height="17.8" fill="none" stroke="#d6d6d6" stroke-width="0.5"/>
<rect x="367.7" y="-310.9" width="14.2" height="25.4" fill="#ebebeb" stroke="#d9d9d9" stroke-width="0.6"/>
<rect x="383.2" y="-312.4" width="37.1" height="28.4" fill="#e8e8e8" stroke="#d9d9d9" stroke-width="0.6"/>
<rect x="421.2" y="-312.4" width="37.1" height="28.4" fill="#ebebeb" stroke="#d9d9d9" stroke-width="0.6"/>
<rect x="459.2" y="-312.4" width="15.1" height="28.4" fill="#ebebeb" stroke="#d9d9d9" stroke-width="0.6"/>
<rect x="475.2" y="-312.4" width="26.5" height="28.4" fill="#e8e8e8" stroke="#d9d9d9" stroke-width="0.6"/>
<rect x="405.7" y="-347.5" width="3.0" height="63.0" fill="#dddddd" stroke="none" stroke-width="0.7"/>
<rect x="525.2" y="-350.5" width="140.8" height="69.0" fill="#ebebeb" stroke="#dcdcdc" stroke-width="0.7"/>
<rect x="527.1" y="-346.5" width="36.2" height="23.8" fill="#ebebeb" stroke="#d9d9d9" stroke-width="0.6"/>
<rect x="564.2" y="-349.5" width="20.0" height="29.8" fill="#e8e8e8" stroke="#d9d9d9" stroke-width="0.6"/>
<rect x="584.2" y="-349.5" width="55.0" height="29.8" fill="#ebebeb" stroke="#d9d9d9" stroke-width="0.6"/>
<rect x="640.1" y="-346.5" width="24.0" height="23.8" fill="#eeeeee" stroke="#d9d9d9" stroke-width="0.6"/>
<rect x="526.2" y="-319.7" width="55.0" height="37.2" fill="#ebebeb" stroke="#d9d9d9" stroke-width="0.6"/>
<rect x="528.2" y="-312.3" width="27.5" height="18.6" fill="none" stroke="#d6d6d6" stroke-width="0.5"/>
<rect x="581.2" y="-319.7" width="25.0" height="37.2" fill="#eeeeee" stroke="#d9d9d9" stroke-width="0.6"/>
<rect x="606.2" y="-319.7" width="58.8" height="37.2" fill="#ebebeb" stroke="#d9d9d9" stroke-width="0.6"/>
<rect x="608.9" y="-347.5" width="3.0" height="63.0" fill="#dddddd" stroke="none" stroke-width="0.7"/>
<rect x="-584.0" y="-262.5" width="268.4" height="69.0" fill="#ebebeb" stroke="#dcdcdc" stroke-width="0.7"/>
<rect x="-582.5" y="-260.0" width="15.1" height="28.6" fill="#ebebeb" stroke="#d9d9d9" stroke-width="0.6"/>
<rect x="-566.1" y="-258.5" width="28.2" height="25.6" fill="#e8e8e8" stroke="#d9d9d9" stroke-width="0.6"/>
<rect x="-537.0" y="-261.5" width="30.0" height="31.6" fill="#e8e8e8" stroke="#d9d9d9" stroke-width="0.6"/>
<rect x="-507.0" y="-261.5" width="25.0" height="31.6" fill="#ebebeb" stroke="#d9d9d9" stroke-width="0.6"/>
<rect x="-481.6" y="-260.0" width="11.1" height="28.6" fill="#ebebeb" stroke="#d9d9d9" stroke-width="0.6"/>
<rect x="-470.0" y="-261.5" width="25.0" height="31.6" fill="#eeeeee" stroke="#d9d9d9" stroke-width="0.6"/>
<rect x="-444.1" y="-258.5" width="18.2" height="25.6" fill="#eeeeee" stroke="#d9d9d9" stroke-width="0.6"/>
<rect x="-425.0" y="-261.5" width="16.0" height="31.6" fill="#e8e8e8" stroke="#d9d9d9" stroke-width="0.6"/>
<rect x="-409.0" y="-261.5" width="25.0" height="31.6" fill="#eeeeee" stroke="#d9d9d9" stroke-width="0.6"/>
<rect x="-383.6" y="-260.0" width="29.1" height="28.6" fill="#ebebeb" stroke="#d9d9d9" stroke-width="0.6"/>
<rect x="-382.0" y="-255.2" width="15.0" height="15.8" fill="none" stroke="#d6d6d6" stroke-width="0.5"/>
<rect x="-354.0" y="-261.5" width="37.4" height="31.6" fill="#eeeeee" stroke="#d9d9d9" stroke-width="0.6"/>
<rect x="-583.0" y="-229.9" width="30.0" height="35.4" fill="#ebebeb" stroke="#d9d9d9" stroke-width="0.6"/>
<rect x="-581.0" y="-222.8" width="15.0" height="17.7" fill="none" stroke="#d6d6d6" stroke-width="0.5"/>
<rect x="-552.5" y="-228.4" width="19.1" height="32.4" fill="#ebebeb" stroke="#d9d9d9" stroke-width="0.6"/>
<rect x="-532.1" y="-226.9" width="23.2" height="29.4" fill="#e8e8e8" stroke="#d9d9d9" stroke-width="0.6"/>
<rect x="-508.0" y="-229.9" width="55.0" height="35.4" fill="#e8e8e8" stroke="#d9d9d9" stroke-width="0.6"/>
<rect x="-452.6" y="-228.4" width="37.1" height="32.4" fill="#ebebeb" stroke="#d9d9d9" stroke-width="0.6"/>
<rect x="-415.0" y="-229.9" width="16.0" height="35.4" fill="#eeeeee" stroke="#d9d9d9" stroke-width="0.6"/>
<rect x="-398.6" y="-228.4" width="37.1" height="32.4" fill="#ebebeb" stroke="#d9d9d9" stroke-width="0.6"/>
<rect x="-361.0" y="-229.9" width="44.4" height="35.4" fill="#eeeeee" stroke="#d9d9d9" stroke-width="0.6"/>
<polygon points="-285.6,-262.5 -303.9,-262.5 -289.4,-193.5 -285.6,-193.5" fill="#ebebeb" stroke="#dadada" stroke-width=".7"/>
<polygon points="-279.9,-262.5 -16.5,-262.5 -16.5,-193.5 -265.4,-193.5" fill="#ebebeb" stroke="#dadada" stroke-width=".7"/>
<path d="M-220.9 -262.5V-193.5" stroke="#d9d9d9" stroke-width=".6"/>
<path d="M-183.2 -262.5V-193.5" stroke="#d9d9d9" stroke-width=".6"/>
<path d="M-141.8 -262.5V-193.5" stroke="#d9d9d9" stroke-width=".6"/>
<path d="M-103.0 -262.5V-193.5" stroke="#d9d9d9" stroke-width=".6"/>
<path d="M-55.6 -262.5V-193.5" stroke="#d9d9d9" stroke-width=".6"/>
<path d="M-271.9 -228.0H-16.5" stroke="#d9d9d9" stroke-width=".6"/>
<rect x="16.5" y="-262.5" width="317.3" height="69.0" fill="#ebebeb" stroke="#dcdcdc" stroke-width="0.7"/>
<rect x="17.5" y="-261.5" width="45.0" height="38.8" fill="#ebebeb" stroke="#d9d9d9" stroke-width="0.6"/>
<rect x="62.5" y="-261.5" width="45.0" height="38.8" fill="#eeeeee" stroke="#d9d9d9" stroke-width="0.6"/>
<rect x="107.5" y="-261.5" width="12.0" height="38.8" fill="#e8e8e8" stroke="#d9d9d9" stroke-width="0.6"/>
<rect x="119.5" y="-261.5" width="30.0" height="38.8" fill="#ebebeb" stroke="#d9d9d9" stroke-width="0.6"/>
<rect x="150.4" y="-258.5" width="53.2" height="32.8" fill="#ebebeb" stroke="#d9d9d9" stroke-width="0.6"/>
<rect x="204.5" y="-261.5" width="12.0" height="38.8" fill="#ebebeb" stroke="#d9d9d9" stroke-width="0.6"/>
<rect x="217.4" y="-258.5" width="36.2" height="32.8" fill="#ebebeb" stroke="#d9d9d9" stroke-width="0.6"/>
<rect x="255.4" y="-258.5" width="53.2" height="32.8" fill="#eeeeee" stroke="#d9d9d9" stroke-width="0.6"/>
<rect x="309.9" y="-260.0" width="22.4" height="35.8" fill="#ebebeb" stroke="#d9d9d9" stroke-width="0.6"/>
<rect x="18.4" y="-219.7" width="28.2" height="22.2" fill="#eeeeee" stroke="#d9d9d9" stroke-width="0.6"/>
<rect x="48.0" y="-221.2" width="29.1" height="25.2" fill="#e8e8e8" stroke="#d9d9d9" stroke-width="0.6"/>
<rect x="77.5" y="-222.7" width="38.0" height="28.2" fill="#eeeeee" stroke="#d9d9d9" stroke-width="0.6"/>
<rect x="115.5" y="-222.7" width="25.0" height="28.2" fill="#e8e8e8" stroke="#d9d9d9" stroke-width="0.6"/>
<rect x="141.4" y="-219.7" width="18.2" height="22.2" fill="#e8e8e8" stroke="#d9d9d9" stroke-width="0.6"/>
<rect x="160.5" y="-222.7" width="30.0" height="28.2" fill="#ebebeb" stroke="#d9d9d9" stroke-width="0.6"/>
<rect x="190.9" y="-221.2" width="54.1" height="25.2" fill="#ebebeb" stroke="#d9d9d9" stroke-width="0.6"/>
<rect x="245.5" y="-222.7" width="45.0" height="28.2" fill="#eeeeee" stroke="#d9d9d9" stroke-width="0.6"/>
<rect x="290.5" y="-222.7" width="42.3" height="28.2" fill="#ebebeb" stroke="#d9d9d9" stroke-width="0.6"/>
<rect x="365.8" y="-262.5" width="137.4" height="69.0" fill="#ebebeb" stroke="#dcdcdc" stroke-width="0.7"/>
<rect x="367.7" y="-258.5" width="28.2" height="23.5" fill="#eeeeee" stroke="#d9d9d9" stroke-width="0.6"/>
<rect x="368.8" y="-255.6" width="15.0" height="14.8" fill="none" stroke="#d6d6d6" stroke-width="0.5"/>
<rect x="396.8" y="-261.5" width="20.0" height="29.5" fill="#ebebeb" stroke="#d9d9d9" stroke-width="0.6"/>
<rect x="416.8" y="-261.5" width="20.0" height="29.5" fill="#ebebeb" stroke="#d9d9d9" stroke-width="0.6"/>
<rect x="437.2" y="-260.0" width="15.1" height="26.5" fill="#e8e8e8" stroke="#d9d9d9" stroke-width="0.6"/>
<rect x="438.8" y="-255.6" width="8.0" height="14.8" fill="none" stroke="#d6d6d6" stroke-width="0.5"/>
<rect x="452.8" y="-261.5" width="30.0" height="29.5" fill="#ebebeb" stroke="#d9d9d9" stroke-width="0.6"/>
<rect x="482.8" y="-261.5" width="19.4" height="29.5" fill="#e8e8e8" stroke="#d9d9d9" stroke-width="0.6"/>
<rect x="484.8" y="-255.6" width="9.7" height="14.8" fill="none" stroke="#d6d6d6" stroke-width="0.5"/>
<rect x="367.2" y="-230.5" width="44.1" height="34.5" fill="#eeeeee" stroke="#d9d9d9" stroke-width="0.6"/>
<rect x="411.8" y="-232.0" width="30.0" height="37.5" fill="#ebebeb" stroke="#d9d9d9" stroke-width="0.6"/>
<rect x="441.8" y="-232.0" width="30.0" height="37.5" fill="#e8e8e8" stroke="#d9d9d9" stroke-width="0.6"/>
<rect x="472.2" y="-230.5" width="19.1" height="34.5" fill="#ebebeb" stroke="#d9d9d9" stroke-width="0.6"/>
<rect x="491.8" y="-232.0" width="10.4" height="37.5" fill="#e8e8e8" stroke="#d9d9d9" stroke-width="0.6"/>
<rect x="525.2" y="-262.5" width="140.8" height="69.0" fill="#ebebeb" stroke="#dcdcdc" stroke-width="0.7"/>
<rect x="526.2" y="-261.5" width="30.0" height="33.2" fill="#eeeeee" stroke="#d9d9d9" stroke-width="0.6"/>
<rect x="557.1" y="-258.5" width="10.2" height="27.2" fill="#ebebeb" stroke="#d9d9d9" stroke-width="0.6"/>
<rect x="568.2" y="-261.5" width="45.0" height="33.2" fill="#eeeeee" stroke="#d9d9d9" stroke-width="0.6"/>
<rect x="613.2" y="-261.5" width="51.8" height="33.2" fill="#eeeeee" stroke="#d9d9d9" stroke-width="0.6"/>
<rect x="526.2" y="-228.3" width="25.0" height="33.8" fill="#e8e8e8" stroke="#d9d9d9" stroke-width="0.6"/>
<rect x="551.7" y="-226.8" width="29.1" height="30.8" fill="#eeeeee" stroke="#d9d9d9" stroke-width="0.6"/>
<rect x="581.7" y="-226.8" width="37.1" height="30.8" fill="#e8e8e8" stroke="#d9d9d9" stroke-width="0.6"/>
<rect x="583.2" y="-221.5" width="19.0" height="16.9" fill="none" stroke="#d6d6d6" stroke-width="0.5"/>
<rect x="619.2" y="-228.3" width="20.0" height="33.8" fill="#eeeeee" stroke="#d9d9d9" stroke-width="0.6"/>
<rect x="639.2" y="-228.3" width="25.8" height="33.8" fill="#ebebeb" stroke="#d9d9d9" stroke-width="0.6"/>
<rect x="-584.0" y="-174.5" width="268.4" height="69.0" fill="#ebebeb" stroke="#dcdcdc" stroke-width="0.7"/>
<rect x="-583.0" y="-173.5" width="16.0" height="34.5" fill="#ebebeb" stroke="#d9d9d9" stroke-width="0.6"/>
<rect x="-581.0" y="-166.6" width="8.0" height="17.2" fill="none" stroke="#d6d6d6" stroke-width="0.5"/>
<rect x="-566.5" y="-172.0" width="15.1" height="31.5" fill="#e8e8e8" stroke="#d9d9d9" stroke-width="0.6"/>
<rect x="-550.1" y="-170.5" width="36.2" height="28.5" fill="#e8e8e8" stroke="#d9d9d9" stroke-width="0.6"/>
<rect x="-512.5" y="-172.0" width="24.1" height="31.5" fill="#ebebeb" stroke="#d9d9d9" stroke-width="0.6"/>
<rect x="-488.0" y="-173.5" width="45.0" height="34.5" fill="#eeeeee" stroke="#d9d9d9" stroke-width="0.6"/>
<rect x="-442.1" y="-170.5" width="36.2" height="28.5" fill="#ebebeb" stroke="#d9d9d9" stroke-width="0.6"/>
<rect x="-405.0" y="-173.5" width="30.0" height="34.5" fill="#ebebeb" stroke="#d9d9d9" stroke-width="0.6"/>
<rect x="-374.1" y="-170.5" width="56.6" height="28.5" fill="#ebebeb" stroke="#d9d9d9" stroke-width="0.6"/>
<rect x="-583.0" y="-139.0" width="38.0" height="32.5" fill="#ebebeb" stroke="#d9d9d9" stroke-width="0.6"/>
<rect x="-544.1" y="-136.0" width="18.2" height="26.5" fill="#ebebeb" stroke="#d9d9d9" stroke-width="0.6"/>
<rect x="-524.1" y="-136.0" width="23.2" height="26.5" fill="#ebebeb" stroke="#d9d9d9" stroke-width="0.6"/>
<rect x="-500.0" y="-139.0" width="20.0" height="32.5" fill="#eeeeee" stroke="#d9d9d9" stroke-width="0.6"/>
<rect x="-480.0" y="-139.0" width="25.0" height="32.5" fill="#eeeeee" stroke="#d9d9d9" stroke-width="0.6"/>
<rect x="-455.0" y="-139.0" width="25.0" height="32.5" fill="#ebebeb" stroke="#d9d9d9" stroke-width="0.6"/>
<rect x="-430.0" y="-139.0" width="45.0" height="32.5" fill="#ebebeb" stroke="#d9d9d9" stroke-width="0.6"/>
<rect x="-428.0" y="-132.5" width="22.5" height="16.3" fill="none" stroke="#d6d6d6" stroke-width="0.5"/>
<rect x="-384.6" y="-137.5" width="37.1" height="29.5" fill="#ebebeb" stroke="#d9d9d9" stroke-width="0.6"/>
<rect x="-347.0" y="-139.0" width="30.4" height="32.5" fill="#ebebeb" stroke="#d9d9d9" stroke-width="0.6"/>
<polygon points="-285.6,-174.5 -285.4,-174.5 -271.0,-105.5 -285.6,-105.5" fill="#ebebeb" stroke="#dadada" stroke-width=".7"/>
<polygon points="-261.4,-174.5 -16.5,-174.5 -16.5,-105.5 -247.0,-105.5" fill="#ebebeb" stroke="#dadada" stroke-width=".7"/>
<path d="M-207.9 -174.5V-105.5" stroke="#d9d9d9" stroke-width=".6"/>
<path d="M-169.5 -174.5V-105.5" stroke="#d9d9d9" stroke-width=".6"/>
<path d="M-134.1 -174.5V-105.5" stroke="#d9d9d9" stroke-width=".6"/>
<path d="M-89.2 -174.5V-105.5" stroke="#d9d9d9" stroke-width=".6"/>
<path d="M-50.0 -174.5V-105.5" stroke="#d9d9d9" stroke-width=".6"/>
<path d="M-253.4 -140.0H-16.5" stroke="#d9d9d9" stroke-width=".6"/>
<rect x="16.5" y="-174.5" width="317.3" height="69.0" fill="#ebebeb" stroke="#dcdcdc" stroke-width="0.7"/>
<rect x="17.5" y="-173.5" width="20.0" height="36.9" fill="#ebebeb" stroke="#d9d9d9" stroke-width="0.6"/>
<rect x="38.4" y="-170.5" width="36.2" height="30.9" fill="#ebebeb" stroke="#d9d9d9" stroke-width="0.6"/>
<rect x="76.4" y="-170.5" width="18.2" height="30.9" fill="#ebebeb" stroke="#d9d9d9" stroke-width="0.6"/>
<rect x="95.5" y="-173.5" width="16.0" height="36.9" fill="#e8e8e8" stroke="#d9d9d9" stroke-width="0.6"/>
<rect x="112.0" y="-172.0" width="19.1" height="33.9" fill="#ebebeb" stroke="#d9d9d9" stroke-width="0.6"/>
<rect x="131.5" y="-173.5" width="12.0" height="36.9" fill="#ebebeb" stroke="#d9d9d9" stroke-width="0.6"/>
<rect x="144.4" y="-170.5" width="10.2" height="30.9" fill="#ebebeb" stroke="#d9d9d9" stroke-width="0.6"/>
<rect x="155.5" y="-173.5" width="45.0" height="36.9" fill="#ebebeb" stroke="#d9d9d9" stroke-width="0.6"/>
<rect x="201.4" y="-170.5" width="28.2" height="30.9" fill="#ebebeb" stroke="#d9d9d9" stroke-width="0.6"/>
<rect x="230.5" y="-173.5" width="12.0" height="36.9" fill="#ebebeb" stroke="#d9d9d9" stroke-width="0.6"/>
<rect x="242.5" y="-173.5" width="55.0" height="36.9" fill="#eeeeee" stroke="#d9d9d9" stroke-width="0.6"/>
<rect x="298.4" y="-170.5" width="33.5" height="30.9" fill="#eeeeee" stroke="#d9d9d9" stroke-width="0.6"/>
<rect x="17.9" y="-135.1" width="29.1" height="27.1" fill="#e8e8e8" stroke="#d9d9d9" stroke-width="0.6"/>
<rect x="47.5" y="-136.6" width="45.0" height="30.1" fill="#e8e8e8" stroke="#d9d9d9" stroke-width="0.6"/>
<rect x="93.4" y="-133.6" width="36.2" height="24.1" fill="#eeeeee" stroke="#d9d9d9" stroke-width="0.6"/>
<rect x="130.5" y="-136.6" width="12.0" height="30.1" fill="#ebebeb" stroke="#d9d9d9" stroke-width="0.6"/>
<rect x="143.4" y="-133.6" width="43.2" height="24.1" fill="#e8e8e8" stroke="#d9d9d9" stroke-width="0.6"/>
<rect x="187.5" y="-136.6" width="30.0" height="30.1" fill="#eeeeee" stroke="#d9d9d9" stroke-width="0.6"/>
<rect x="218.4" y="-133.6" width="53.2" height="24.1" fill="#ebebeb" stroke="#d9d9d9" stroke-width="0.6"/>
<rect x="272.5" y="-136.6" width="12.0" height="30.1" fill="#e8e8e8" stroke="#d9d9d9" stroke-width="0.6"/>
<rect x="284.5" y="-136.6" width="25.0" height="30.1" fill="#eeeeee" stroke="#d9d9d9" stroke-width="0.6"/>
<rect x="309.5" y="-136.6" width="23.3" height="30.1" fill="#ebebeb" stroke="#d9d9d9" stroke-width="0.6"/>
<rect x="233.3" y="-171.5" width="3.0" height="63.0" fill="#dddddd" stroke="none" stroke-width="0.7"/>
<rect x="365.8" y="-174.5" width="137.4" height="69.0" fill="#ebebeb" stroke="#dcdcdc" stroke-width="0.7"/>
<rect x="366.8" y="-173.5" width="45.0" height="30.5" fill="#eeeeee" stroke="#d9d9d9" stroke-width="0.6"/>
<rect x="411.8" y="-173.5" width="16.0" height="30.5" fill="#eeeeee" stroke="#d9d9d9" stroke-width="0.6"/>
<rect x="427.8" y="-173.5" width="55.0" height="30.5" fill="#ebebeb" stroke="#d9d9d9" stroke-width="0.6"/>
<rect x="482.8" y="-173.5" width="19.4" height="30.5" fill="#ebebeb" stroke="#d9d9d9" stroke-width="0.6"/>
<rect x="367.7" y="-140.0" width="53.2" height="30.5" fill="#e8e8e8" stroke="#d9d9d9" stroke-width="0.6"/>
<rect x="421.8" y="-143.0" width="38.0" height="36.5" fill="#eeeeee" stroke="#d9d9d9" stroke-width="0.6"/>
<rect x="423.8" y="-135.7" width="19.0" height="18.2" fill="none" stroke="#d6d6d6" stroke-width="0.5"/>
<rect x="459.8" y="-143.0" width="12.0" height="36.5" fill="#e8e8e8" stroke="#d9d9d9" stroke-width="0.6"/>
<rect x="472.2" y="-141.5" width="29.5" height="33.5" fill="#ebebeb" stroke="#d9d9d9" stroke-width="0.6"/>
<rect x="464.1" y="-171.5" width="3.0" height="63.0" fill="#dddddd" stroke="none" stroke-width="0.7"/>
<rect x="525.2" y="-174.5" width="140.8" height="69.0" fill="#ebebeb" stroke="#dcdcdc" stroke-width="0.7"/>
<rect x="526.2" y="-173.5" width="12.0" height="35.6" fill="#ebebeb" stroke="#d9d9d9" stroke-width="0.6"/>
<rect x="538.2" y="-173.5" width="38.0" height="35.6" fill="#e8e8e8" stroke="#d9d9d9" stroke-width="0.6"/>
<rect x="576.2" y="-173.5" width="25.0" height="35.6" fill="#eeeeee" stroke="#d9d9d9" stroke-width="0.6"/>
<rect x="601.2" y="-173.5" width="12.0" height="35.6" fill="#ebebeb" stroke="#d9d9d9" stroke-width="0.6"/>
<rect x="613.7" y="-172.0" width="37.1" height="32.6" fill="#ebebeb" stroke="#d9d9d9" stroke-width="0.6"/>
<rect x="651.7" y="-172.0" width="12.9" height="32.6" fill="#ebebeb" stroke="#d9d9d9" stroke-width="0.6"/>
<rect x="526.2" y="-137.9" width="20.0" height="31.4" fill="#ebebeb" stroke="#d9d9d9" stroke-width="0.6"/>
<rect x="546.2" y="-137.9" width="25.0" height="31.4" fill="#ebebeb" stroke="#d9d9d9" stroke-width="0.6"/>
<rect x="571.2" y="-137.9" width="30.0" height="31.4" fill="#ebebeb" stroke="#d9d9d9" stroke-width="0.6"/>
<rect x="602.1" y="-134.9" width="14.2" height="25.4" fill="#eeeeee" stroke="#d9d9d9" stroke-width="0.6"/>
<rect x="617.2" y="-137.9" width="30.0" height="31.4" fill="#ebebeb" stroke="#d9d9d9" stroke-width="0.6"/>
<rect x="647.2" y="-137.9" width="17.8" height="31.4" fill="#e8e8e8" stroke="#d9d9d9" stroke-width="0.6"/>
<rect x="-584.0" y="-86.5" width="268.4" height="71.0" fill="#ebebeb" stroke="#dcdcdc" stroke-width="0.7"/>
<rect x="-582.1" y="-82.5" width="10.2" height="28.8" fill="#ebebeb" stroke="#d9d9d9" stroke-width="0.6"/>
<rect x="-570.1" y="-82.5" width="28.2" height="28.8" fill="#e8e8e8" stroke="#d9d9d9" stroke-width="0.6"/>
<rect x="-569.0" y="-78.5" width="15.0" height="17.4" fill="none" stroke="#d6d6d6" stroke-width="0.5"/>
<rect x="-541.0" y="-85.5" width="30.0" height="34.8" fill="#ebebeb" stroke="#d9d9d9" stroke-width="0.6"/>
<rect x="-511.0" y="-85.5" width="12.0" height="34.8" fill="#ebebeb" stroke="#d9d9d9" stroke-width="0.6"/>
<rect x="-498.6" y="-84.0" width="11.1" height="31.8" fill="#eeeeee" stroke="#d9d9d9" stroke-width="0.6"/>
<rect x="-486.6" y="-84.0" width="44.1" height="31.8" fill="#ebebeb" stroke="#d9d9d9" stroke-width="0.6"/>
<rect x="-485.0" y="-78.5" width="22.5" height="17.4" fill="none" stroke="#d6d6d6" stroke-width="0.5"/>
<rect x="-442.0" y="-85.5" width="16.0" height="34.8" fill="#eeeeee" stroke="#d9d9d9" stroke-width="0.6"/>
<rect x="-425.1" y="-82.5" width="53.2" height="28.8" fill="#ebebeb" stroke="#d9d9d9" stroke-width="0.6"/>
<rect x="-371.0" y="-85.5" width="20.0" height="34.8" fill="#eeeeee" stroke="#d9d9d9" stroke-width="0.6"/>
<rect x="-369.0" y="-78.5" width="10.0" height="17.4" fill="none" stroke="#d6d6d6" stroke-width="0.5"/>
<rect x="-350.6" y="-84.0" width="33.5" height="31.8" fill="#ebebeb" stroke="#d9d9d9" stroke-width="0.6"/>
<rect x="-583.0" y="-50.7" width="30.0" height="34.2" fill="#ebebeb" stroke="#d9d9d9" stroke-width="0.6"/>
<rect x="-552.1" y="-47.7" width="23.2" height="28.2" fill="#eeeeee" stroke="#d9d9d9" stroke-width="0.6"/>
<rect x="-527.1" y="-47.7" width="10.2" height="28.2" fill="#ebebeb" stroke="#d9d9d9" stroke-width="0.6"/>
<rect x="-515.5" y="-49.2" width="11.1" height="31.2" fill="#eeeeee" stroke="#d9d9d9" stroke-width="0.6"/>
<rect x="-504.0" y="-50.7" width="20.0" height="34.2" fill="#ebebeb" stroke="#d9d9d9" stroke-width="0.6"/>
<rect x="-483.1" y="-47.7" width="53.2" height="28.2" fill="#e8e8e8" stroke="#d9d9d9" stroke-width="0.6"/>
<rect x="-429.0" y="-50.7" width="30.0" height="34.2" fill="#ebebeb" stroke="#d9d9d9" stroke-width="0.6"/>
<rect x="-427.0" y="-43.8" width="15.0" height="17.1" fill="none" stroke="#d6d6d6" stroke-width="0.5"/>
<rect x="-398.1" y="-47.7" width="18.2" height="28.2" fill="#eeeeee" stroke="#d9d9d9" stroke-width="0.6"/>
<rect x="-379.0" y="-50.7" width="25.0" height="34.2" fill="#eeeeee" stroke="#d9d9d9" stroke-width="0.6"/>
<rect x="-377.0" y="-43.8" width="12.5" height="17.1" fill="none" stroke="#d6d6d6" stroke-width="0.5"/>
<rect x="-354.0" y="-50.7" width="37.4" height="34.2" fill="#ebebeb" stroke="#d9d9d9" stroke-width="0.6"/>
<polygon points="-285.6,-86.5 -267.0,-86.5 -252.1,-15.5 -285.6,-15.5" fill="#ebebeb" stroke="#dadada" stroke-width=".7"/>
<polygon points="-243.0,-86.5 -16.5,-86.5 -16.5,-15.5 -228.1,-15.5" fill="#ebebeb" stroke="#dadada" stroke-width=".7"/>
<path d="M-190.0 -86.5V-15.5" stroke="#d9d9d9" stroke-width=".6"/>
<path d="M-154.9 -86.5V-15.5" stroke="#d9d9d9" stroke-width=".6"/>
<path d="M-122.3 -86.5V-15.5" stroke="#d9d9d9" stroke-width=".6"/>
<path d="M-85.5 -86.5V-15.5" stroke="#d9d9d9" stroke-width=".6"/>
<path d="M-51.7 -86.5V-15.5" stroke="#d9d9d9" stroke-width=".6"/>
<path d="M-235.0 -51.0H-16.5" stroke="#d9d9d9" stroke-width=".6"/>
<rect x="16.5" y="-86.5" width="317.3" height="71.0" fill="#ebebeb" stroke="#dcdcdc" stroke-width="0.7"/>
<rect x="17.9" y="-84.0" width="24.1" height="30.2" fill="#ebebeb" stroke="#d9d9d9" stroke-width="0.6"/>
<rect x="42.5" y="-85.5" width="55.0" height="33.2" fill="#ebebeb" stroke="#d9d9d9" stroke-width="0.6"/>
<rect x="97.5" y="-85.5" width="38.0" height="33.2" fill="#ebebeb" stroke="#d9d9d9" stroke-width="0.6"/>
<rect x="135.9" y="-84.0" width="19.1" height="30.2" fill="#ebebeb" stroke="#d9d9d9" stroke-width="0.6"/>
<rect x="155.5" y="-85.5" width="12.0" height="33.2" fill="#ebebeb" stroke="#d9d9d9" stroke-width="0.6"/>
<rect x="167.9" y="-84.0" width="19.1" height="30.2" fill="#ebebeb" stroke="#d9d9d9" stroke-width="0.6"/>
<rect x="187.5" y="-85.5" width="55.0" height="33.2" fill="#e8e8e8" stroke="#d9d9d9" stroke-width="0.6"/>
<rect x="242.5" y="-85.5" width="25.0" height="33.2" fill="#ebebeb" stroke="#d9d9d9" stroke-width="0.6"/>
<rect x="244.5" y="-78.9" width="12.5" height="16.6" fill="none" stroke="#d6d6d6" stroke-width="0.5"/>
<rect x="267.9" y="-84.0" width="24.1" height="30.2" fill="#e8e8e8" stroke="#d9d9d9" stroke-width="0.6"/>
<rect x="269.5" y="-78.9" width="12.5" height="16.6" fill="none" stroke="#d6d6d6" stroke-width="0.5"/>
<rect x="292.5" y="-85.5" width="25.0" height="33.2" fill="#ebebeb" stroke="#d9d9d9" stroke-width="0.6"/>
<rect x="317.5" y="-85.5" width="15.3" height="33.2" fill="#ebebeb" stroke="#d9d9d9" stroke-width="0.6"/>
<rect x="18.4" y="-49.3" width="10.2" height="29.8" fill="#ebebeb" stroke="#d9d9d9" stroke-width="0.6"/>
<rect x="29.9" y="-50.8" width="19.1" height="32.8" fill="#e8e8e8" stroke="#d9d9d9" stroke-width="0.6"/>
<rect x="50.0" y="-50.8" width="24.1" height="32.8" fill="#e8e8e8" stroke="#d9d9d9" stroke-width="0.6"/>
<rect x="74.5" y="-52.3" width="25.0" height="35.8" fill="#e8e8e8" stroke="#d9d9d9" stroke-width="0.6"/>
<rect x="99.5" y="-52.3" width="20.0" height="35.8" fill="#e8e8e8" stroke="#d9d9d9" stroke-width="0.6"/>
<rect x="120.0" y="-50.8" width="54.1" height="32.8" fill="#ebebeb" stroke="#d9d9d9" stroke-width="0.6"/>
<rect x="174.5" y="-52.3" width="20.0" height="35.8" fill="#e8e8e8" stroke="#d9d9d9" stroke-width="0.6"/>
<rect x="194.5" y="-52.3" width="45.0" height="35.8" fill="#ebebeb" stroke="#d9d9d9" stroke-width="0.6"/>
<rect x="240.4" y="-49.3" width="36.2" height="29.8" fill="#ebebeb" stroke="#d9d9d9" stroke-width="0.6"/>
<rect x="241.5" y="-45.2" width="19.0" height="17.9" fill="none" stroke="#d6d6d6" stroke-width="0.5"/>
<rect x="278.4" y="-49.3" width="18.2" height="29.8" fill="#ebebeb" stroke="#d9d9d9" stroke-width="0.6"/>
<rect x="297.5" y="-52.3" width="25.0" height="35.8" fill="#ebebeb" stroke="#d9d9d9" stroke-width="0.6"/>
<rect x="322.5" y="-52.3" width="10.3" height="35.8" fill="#ebebeb" stroke="#d9d9d9" stroke-width="0.6"/>
<rect x="365.8" y="-86.5" width="137.4" height="71.0" fill="#ebebeb" stroke="#dcdcdc" stroke-width="0.7"/>
<rect x="367.2" y="-84.0" width="11.1" height="36.0" fill="#ebebeb" stroke="#d9d9d9" stroke-width="0.6"/>
<rect x="378.8" y="-85.5" width="45.0" height="39.0" fill="#ebebeb" stroke="#d9d9d9" stroke-width="0.6"/>
<rect x="424.2" y="-84.0" width="11.1" height="36.0" fill="#ebebeb" stroke="#d9d9d9" stroke-width="0.6"/>
<rect x="435.8" y="-85.5" width="55.0" height="39.0" fill="#ebebeb" stroke="#d9d9d9" stroke-width="0.6"/>
<rect x="490.8" y="-85.5" width="11.4" height="39.0" fill="#ebebeb" stroke="#d9d9d9" stroke-width="0.6"/>
<rect x="367.7" y="-43.5" width="43.2" height="24.0" fill="#e8e8e8" stroke="#d9d9d9" stroke-width="0.6"/>
<rect x="412.2" y="-45.0" width="29.1" height="27.0" fill="#ebebeb" stroke="#d9d9d9" stroke-width="0.6"/>
<rect x="441.8" y="-46.5" width="20.0" height="30.0" fill="#ebebeb" stroke="#d9d9d9" stroke-width="0.6"/>
<rect x="461.8" y="-46.5" width="40.4" height="30.0" fill="#e8e8e8" stroke="#d9d9d9" stroke-width="0.6"/>
<rect x="525.2" y="-86.5" width="140.8" height="71.0" fill="#ebebeb" stroke="#dcdcdc" stroke-width="0.7"/>
<rect x="526.2" y="-85.5" width="30.0" height="31.5" fill="#ebebeb" stroke="#d9d9d9" stroke-width="0.6"/>
<rect x="556.2" y="-85.5" width="20.0" height="31.5" fill="#ebebeb" stroke="#d9d9d9" stroke-width="0.6"/>
<rect x="576.2" y="-85.5" width="55.0" height="31.5" fill="#eeeeee" stroke="#d9d9d9" stroke-width="0.6"/>
<rect x="631.2" y="-85.5" width="33.8" height="31.5" fill="#ebebeb" stroke="#d9d9d9" stroke-width="0.6"/>
<rect x="526.2" y="-54.0" width="38.0" height="37.5" fill="#ebebeb" stroke="#d9d9d9" stroke-width="0.6"/>
<rect x="564.7" y="-52.5" width="29.1" height="34.5" fill="#ebebeb" stroke="#d9d9d9" stroke-width="0.6"/>
<rect x="566.2" y="-46.5" width="15.0" height="18.8" fill="none" stroke="#d6d6d6" stroke-width="0.5"/>
<rect x="594.7" y="-52.5" width="54.1" height="34.5" fill="#ebebeb" stroke="#d9d9d9" stroke-width="0.6"/>
<rect x="649.7" y="-52.5" width="14.9" height="34.5" fill="#ebebeb" stroke="#d9d9d9" stroke-width="0.6"/>
<rect x="631.5" y="-83.5" width="3.0" height="65.0" fill="#dddddd" stroke="none" stroke-width="0.7"/>
<rect x="-584.0" y="15.5" width="268.4" height="66.4" fill="#ebebeb" stroke="#dcdcdc" stroke-width="0.7"/>
<rect x="-583.0" y="16.5" width="20.0" height="29.1" fill="#ebebeb" stroke="#d9d9d9" stroke-width="0.6"/>
<rect x="-563.0" y="16.5" width="38.0" height="29.1" fill="#e8e8e8" stroke="#d9d9d9" stroke-width="0.6"/>
<rect x="-525.0" y="16.5" width="30.0" height="29.1" fill="#eeeeee" stroke="#d9d9d9" stroke-width="0.6"/>
<rect x="-495.0" y="16.5" width="12.0" height="29.1" fill="#e8e8e8" stroke="#d9d9d9" stroke-width="0.6"/>
<rect x="-483.0" y="16.5" width="16.0" height="29.1" fill="#e8e8e8" stroke="#d9d9d9" stroke-width="0.6"/>
<rect x="-481.0" y="22.3" width="8.0" height="14.6" fill="none" stroke="#d6d6d6" stroke-width="0.5"/>
<rect x="-467.0" y="16.5" width="55.0" height="29.1" fill="#eeeeee" stroke="#d9d9d9" stroke-width="0.6"/>
<rect x="-412.0" y="16.5" width="38.0" height="29.1" fill="#ebebeb" stroke="#d9d9d9" stroke-width="0.6"/>
<rect x="-410.0" y="22.3" width="19.0" height="14.6" fill="none" stroke="#d6d6d6" stroke-width="0.5"/>
<rect x="-374.0" y="16.5" width="38.0" height="29.1" fill="#ebebeb" stroke="#d9d9d9" stroke-width="0.6"/>
<rect x="-335.6" y="18.0" width="18.5" height="26.1" fill="#ebebeb" stroke="#d9d9d9" stroke-width="0.6"/>
<rect x="-583.0" y="45.6" width="38.0" height="35.3" fill="#ebebeb" stroke="#d9d9d9" stroke-width="0.6"/>
<rect x="-545.0" y="45.6" width="25.0" height="35.3" fill="#ebebeb" stroke="#d9d9d9" stroke-width="0.6"/>
<rect x="-519.5" y="47.1" width="44.1" height="32.3" fill="#eeeeee" stroke="#d9d9d9" stroke-width="0.6"/>
<rect x="-518.0" y="52.7" width="22.5" height="17.6" fill="none" stroke="#d6d6d6" stroke-width="0.5"/>
<rect x="-474.6" y="47.1" width="15.1" height="32.3" fill="#e8e8e8" stroke="#d9d9d9" stroke-width="0.6"/>
<rect x="-459.0" y="45.6" width="45.0" height="35.3" fill="#ebebeb" stroke="#d9d9d9" stroke-width="0.6"/>
<rect x="-413.6" y="47.1" width="29.1" height="32.3" fill="#ebebeb" stroke="#d9d9d9" stroke-width="0.6"/>
<rect x="-383.1" y="48.6" width="10.2" height="29.3" fill="#ebebeb" stroke="#d9d9d9" stroke-width="0.6"/>
<rect x="-372.0" y="45.6" width="25.0" height="35.3" fill="#ebebeb" stroke="#d9d9d9" stroke-width="0.6"/>
<rect x="-346.6" y="47.1" width="11.1" height="32.3" fill="#eeeeee" stroke="#d9d9d9" stroke-width="0.6"/>
<rect x="-345.0" y="52.7" width="6.0" height="17.6" fill="none" stroke="#d6d6d6" stroke-width="0.5"/>
<rect x="-335.0" y="45.6" width="18.4" height="35.3" fill="#eeeeee" stroke="#d9d9d9" stroke-width="0.6"/>
<polygon points="-285.6,15.5 -245.5,15.5 -231.6,81.9 -285.6,81.9" fill="#ebebeb" stroke="#dadada" stroke-width=".7"/>
<polygon points="-221.5,15.5 -16.5,15.5 -16.5,81.9 -207.6,81.9" fill="#ebebeb" stroke="#dadada" stroke-width=".7"/>
<path d="M-172.4 15.5V81.9" stroke="#d9d9d9" stroke-width=".6"/>
<path d="M-139.2 15.5V81.9" stroke="#d9d9d9" stroke-width=".6"/>
<path d="M-113.7 15.5V81.9" stroke="#d9d9d9" stroke-width=".6"/>
<path d="M-81.7 15.5V81.9" stroke="#d9d9d9" stroke-width=".6"/>
<path d="M-44.5 15.5V81.9" stroke="#d9d9d9" stroke-width=".6"/>
<path d="M-213.5 48.7H-16.5" stroke="#d9d9d9" stroke-width=".6"/>
<rect x="365.8" y="15.5" width="137.4" height="66.4" fill="#ebebeb" stroke="#dcdcdc" stroke-width="0.7"/>
<rect x="366.8" y="16.5" width="25.0" height="30.3" fill="#e8e8e8" stroke="#d9d9d9" stroke-width="0.6"/>
<rect x="391.8" y="16.5" width="20.0" height="30.3" fill="#ebebeb" stroke="#d9d9d9" stroke-width="0.6"/>
<rect x="411.8" y="16.5" width="55.0" height="30.3" fill="#eeeeee" stroke="#d9d9d9" stroke-width="0.6"/>
<rect x="467.7" y="19.5" width="33.6" height="24.3" fill="#ebebeb" stroke="#d9d9d9" stroke-width="0.6"/>
<rect x="366.8" y="46.8" width="25.0" height="34.1" fill="#ebebeb" stroke="#d9d9d9" stroke-width="0.6"/>
<rect x="391.8" y="46.8" width="20.0" height="34.1" fill="#ebebeb" stroke="#d9d9d9" stroke-width="0.6"/>
<rect x="412.2" y="48.3" width="29.1" height="31.1" fill="#ebebeb" stroke="#d9d9d9" stroke-width="0.6"/>
<rect x="441.8" y="46.8" width="60.4" height="34.1" fill="#ebebeb" stroke="#d9d9d9" stroke-width="0.6"/>
<rect x="433.0" y="18.5" width="3.0" height="60.4" fill="#dddddd" stroke="none" stroke-width="0.7"/>
<rect x="525.2" y="15.5" width="140.8" height="66.4" fill="#ebebeb" stroke="#dcdcdc" stroke-width="0.7"/>
<rect x="526.7" y="18.0" width="44.1" height="27.6" fill="#eeeeee" stroke="#d9d9d9" stroke-width="0.6"/>
<rect x="571.2" y="16.5" width="30.0" height="30.6" fill="#ebebeb" stroke="#d9d9d9" stroke-width="0.6"/>
<rect x="601.2" y="16.5" width="25.0" height="30.6" fill="#eeeeee" stroke="#d9d9d9" stroke-width="0.6"/>
<rect x="627.1" y="19.5" width="37.0" height="24.6" fill="#ebebeb" stroke="#d9d9d9" stroke-width="0.6"/>
<rect x="526.2" y="47.1" width="30.0" height="33.8" fill="#ebebeb" stroke="#d9d9d9" stroke-width="0.6"/>
<rect x="556.2" y="47.1" width="30.0" height="33.8" fill="#ebebeb" stroke="#d9d9d9" stroke-width="0.6"/>
<rect x="586.2" y="47.1" width="55.0" height="33.8" fill="#eeeeee" stroke="#d9d9d9" stroke-width="0.6"/>
<rect x="641.2" y="47.1" width="23.8" height="33.8" fill="#e8e8e8" stroke="#d9d9d9" stroke-width="0.6"/>
<rect x="632.2" y="18.5" width="3.0" height="60.4" fill="#dddddd" stroke="none" stroke-width="0.7"/>
<rect x="-584.0" y="100.9" width="268.4" height="69.0" fill="#ebebeb" stroke="#dcdcdc" stroke-width="0.7"/>
<rect x="-583.0" y="101.9" width="12.0" height="38.7" fill="#ebebeb" stroke="#d9d9d9" stroke-width="0.6"/>
<rect x="-571.0" y="101.9" width="25.0" height="38.7" fill="#ebebeb" stroke="#d9d9d9" stroke-width="0.6"/>
<rect x="-546.0" y="101.9" width="16.0" height="38.7" fill="#e8e8e8" stroke="#d9d9d9" stroke-width="0.6"/>
<rect x="-530.0" y="101.9" width="55.0" height="38.7" fill="#ebebeb" stroke="#d9d9d9" stroke-width="0.6"/>
<rect x="-528.0" y="109.6" width="27.5" height="19.4" fill="none" stroke="#d6d6d6" stroke-width="0.5"/>
<rect x="-475.0" y="101.9" width="55.0" height="38.7" fill="#ebebeb" stroke="#d9d9d9" stroke-width="0.6"/>
<rect x="-419.1" y="104.9" width="43.2" height="32.7" fill="#ebebeb" stroke="#d9d9d9" stroke-width="0.6"/>
<rect x="-375.0" y="101.9" width="25.0" height="38.7" fill="#eeeeee" stroke="#d9d9d9" stroke-width="0.6"/>
<rect x="-350.0" y="101.9" width="20.0" height="38.7" fill="#e8e8e8" stroke="#d9d9d9" stroke-width="0.6"/>
<rect x="-329.6" y="103.4" width="12.5" height="35.7" fill="#e8e8e8" stroke="#d9d9d9" stroke-width="0.6"/>
<rect x="-583.0" y="140.6" width="38.0" height="28.3" fill="#ebebeb" stroke="#d9d9d9" stroke-width="0.6"/>
<rect x="-544.5" y="142.1" width="19.1" height="25.3" fill="#ebebeb" stroke="#d9d9d9" stroke-width="0.6"/>
<rect x="-524.5" y="142.1" width="24.1" height="25.3" fill="#ebebeb" stroke="#d9d9d9" stroke-width="0.6"/>
<rect x="-500.0" y="140.6" width="30.0" height="28.3" fill="#eeeeee" stroke="#d9d9d9" stroke-width="0.6"/>
<rect x="-470.0" y="140.6" width="12.0" height="28.3" fill="#ebebeb" stroke="#d9d9d9" stroke-width="0.6"/>
<rect x="-468.0" y="146.3" width="6.0" height="14.1" fill="none" stroke="#d6d6d6" stroke-width="0.5"/>
<rect x="-458.0" y="140.6" width="38.0" height="28.3" fill="#e8e8e8" stroke="#d9d9d9" stroke-width="0.6"/>
<rect x="-419.6" y="142.1" width="24.1" height="25.3" fill="#e8e8e8" stroke="#d9d9d9" stroke-width="0.6"/>
<rect x="-418.0" y="146.3" width="12.5" height="14.1" fill="none" stroke="#d6d6d6" stroke-width="0.5"/>
<rect x="-394.6" y="142.1" width="37.1" height="25.3" fill="#eeeeee" stroke="#d9d9d9" stroke-width="0.6"/>
<rect x="-356.1" y="143.6" width="23.2" height="22.3" fill="#eeeeee" stroke="#d9d9d9" stroke-width="0.6"/>
<rect x="-332.0" y="140.6" width="15.4" height="28.3" fill="#ebebeb" stroke="#d9d9d9" stroke-width="0.6"/>
<polygon points="-285.6,100.9 -227.6,100.9 -213.1,169.9 -285.6,169.9" fill="#ebebeb" stroke="#dadada" stroke-width=".7"/>
<polygon points="-203.6,100.9 -16.5,100.9 -16.5,169.9 -189.1,169.9" fill="#ebebeb" stroke="#dadada" stroke-width=".7"/>
<path d="M-155.4 100.9V169.9" stroke="#d9d9d9" stroke-width=".6"/>
<path d="M-132.1 100.9V169.9" stroke="#d9d9d9" stroke-width=".6"/>
<path d="M-99.5 100.9V169.9" stroke="#d9d9d9" stroke-width=".6"/>
<path d="M-71.8 100.9V169.9" stroke="#d9d9d9" stroke-width=".6"/>
<path d="M-48.5 100.9V169.9" stroke="#d9d9d9" stroke-width=".6"/>
<path d="M-195.6 135.4H-16.5" stroke="#d9d9d9" stroke-width=".6"/>
<rect x="16.5" y="15.5" width="317.3" height="154.4" fill="#f1f3f1" stroke="#dadada" stroke-width="0.7"/>
<rect x="21.5" y="20.5" width="186.7" height="144.4" fill="#edf1ed" stroke="#d3dbd3" stroke-width="0.6"/>
<rect x="34.5" y="31.5" width="160.7" height="122.4" fill="#eaefea" stroke="#d3dbd3" stroke-width="0.6"/>
<rect x="24.5" y="147.9" width="17.1" height="12.0" fill="none" stroke="#d3dbd3" stroke-width="0.5"/>
<rect x="44.6" y="147.9" width="17.1" height="12.0" fill="none" stroke="#d3dbd3" stroke-width="0.5"/>
<rect x="64.7" y="147.9" width="17.1" height="12.0" fill="none" stroke="#d3dbd3" stroke-width="0.5"/>
<rect x="84.7" y="147.9" width="17.1" height="12.0" fill="none" stroke="#d3dbd3" stroke-width="0.5"/>
<rect x="104.8" y="147.9" width="17.1" height="12.0" fill="none" stroke="#d3dbd3" stroke-width="0.5"/>
<rect x="124.9" y="147.9" width="17.1" height="12.0" fill="none" stroke="#d3dbd3" stroke-width="0.5"/>
<rect x="145.0" y="147.9" width="17.1" height="12.0" fill="none" stroke="#d3dbd3" stroke-width="0.5"/>
<rect x="165.1" y="147.9" width="17.1" height="12.0" fill="none" stroke="#d3dbd3" stroke-width="0.5"/>
<rect x="185.1" y="147.9" width="17.1" height="12.0" fill="none" stroke="#d3dbd3" stroke-width="0.5"/>
<path d="M21.5 92.7H208.2" stroke="#d3dbd3" stroke-width=".6"/>
<rect x="213.2" y="19.5" width="86.8" height="146.4" fill="#ebebeb" stroke="#d6d6d6" stroke-width="0.7"/>
<rect x="219.2" y="29.5" width="18.0" height="126.4" fill="none" stroke="#d9d9d9" stroke-width="0.6"/>
<rect x="241.2" y="29.5" width="18.0" height="126.4" fill="none" stroke="#d9d9d9" stroke-width="0.6"/>
<rect x="263.2" y="29.5" width="18.0" height="126.4" fill="none" stroke="#d9d9d9" stroke-width="0.6"/>
<rect x="296.0" y="23.5" width="4.0" height="138.4" fill="#dcdcdc" stroke="none" stroke-width="0.7"/>
<rect x="304.9" y="25.5" width="24.1" height="134.4" fill="#eef1ee" stroke="#d3dbd3" stroke-width="0.6"/>
<rect x="365.8" y="15.5" width="137.4" height="154.4" fill="#ebebeb" stroke="#dcdcdc" stroke-width="0.7"/>
<rect x="366.8" y="16.5" width="20.0" height="64.7" fill="#eeeeee" stroke="#d9d9d9" stroke-width="0.6"/>
<rect x="386.8" y="16.5" width="30.0" height="64.7" fill="#ebebeb" stroke="#d9d9d9" stroke-width="0.6"/>
<rect x="417.7" y="19.5" width="28.2" height="58.7" fill="#ebebeb" stroke="#d9d9d9" stroke-width="0.6"/>
<rect x="446.8" y="16.5" width="25.0" height="64.7" fill="#ebebeb" stroke="#d9d9d9" stroke-width="0.6"/>
<rect x="448.8" y="29.4" width="12.5" height="32.3" fill="none" stroke="#d6d6d6" stroke-width="0.5"/>
<rect x="472.2" y="18.0" width="29.5" height="61.7" fill="#ebebeb" stroke="#d9d9d9" stroke-width="0.6"/>
<rect x="367.2" y="82.7" width="15.1" height="84.7" fill="#e8e8e8" stroke="#d9d9d9" stroke-width="0.6"/>
<rect x="383.7" y="84.2" width="43.2" height="81.7" fill="#ebebeb" stroke="#d9d9d9" stroke-width="0.6"/>
<rect x="384.8" y="98.7" width="22.5" height="43.9" fill="none" stroke="#d6d6d6" stroke-width="0.5"/>
<rect x="427.8" y="81.2" width="20.0" height="87.7" fill="#ebebeb" stroke="#d9d9d9" stroke-width="0.6"/>
<rect x="447.8" y="81.2" width="38.0" height="87.7" fill="#eeeeee" stroke="#d9d9d9" stroke-width="0.6"/>
<rect x="485.8" y="81.2" width="16.4" height="87.7" fill="#e8e8e8" stroke="#d9d9d9" stroke-width="0.6"/>
<rect x="447.1" y="18.5" width="3.0" height="148.4" fill="#dddddd" stroke="none" stroke-width="0.7"/>
<rect x="525.2" y="15.5" width="140.8" height="154.4" fill="#ebebeb" stroke="#dcdcdc" stroke-width="0.7"/>
<rect x="526.2" y="16.5" width="30.0" height="78.5" fill="#ebebeb" stroke="#d9d9d9" stroke-width="0.6"/>
<rect x="556.2" y="16.5" width="25.0" height="78.5" fill="#ebebeb" stroke="#d9d9d9" stroke-width="0.6"/>
<rect x="581.2" y="16.5" width="25.0" height="78.5" fill="#ebebeb" stroke="#d9d9d9" stroke-width="0.6"/>
<rect x="583.2" y="32.2" width="12.5" height="39.2" fill="none" stroke="#d6d6d6" stroke-width="0.5"/>
<rect x="606.2" y="16.5" width="20.0" height="78.5" fill="#ebebeb" stroke="#d9d9d9" stroke-width="0.6"/>
<rect x="626.7" y="18.0" width="11.1" height="75.5" fill="#ebebeb" stroke="#d9d9d9" stroke-width="0.6"/>
<rect x="638.2" y="16.5" width="26.8" height="78.5" fill="#ebebeb" stroke="#d9d9d9" stroke-width="0.6"/>
<rect x="526.2" y="95.0" width="25.0" height="73.9" fill="#ebebeb" stroke="#d9d9d9" stroke-width="0.6"/>
<rect x="551.2" y="95.0" width="16.0" height="73.9" fill="#eeeeee" stroke="#d9d9d9" stroke-width="0.6"/>
<rect x="567.7" y="96.5" width="24.1" height="70.9" fill="#e8e8e8" stroke="#d9d9d9" stroke-width="0.6"/>
<rect x="592.2" y="95.0" width="20.0" height="73.9" fill="#ebebeb" stroke="#d9d9d9" stroke-width="0.6"/>
<rect x="612.2" y="95.0" width="38.0" height="73.9" fill="#ebebeb" stroke="#d9d9d9" stroke-width="0.6"/>
<rect x="650.7" y="96.5" width="13.9" height="70.9" fill="#ebebeb" stroke="#d9d9d9" stroke-width="0.6"/>
<rect x="605.4" y="18.5" width="3.0" height="148.4" fill="#dddddd" stroke="none" stroke-width="0.7"/>
<rect x="-584.0" y="188.9" width="268.4" height="69.0" fill="#ebebeb" stroke="#dcdcdc" stroke-width="0.7"/>
<rect x="-582.1" y="192.9" width="53.2" height="25.8" fill="#e8e8e8" stroke="#d9d9d9" stroke-width="0.6"/>
<rect x="-527.5" y="191.4" width="15.1" height="28.8" fill="#ebebeb" stroke="#d9d9d9" stroke-width="0.6"/>
<rect x="-511.6" y="191.4" width="54.1" height="28.8" fill="#e8e8e8" stroke="#d9d9d9" stroke-width="0.6"/>
<rect x="-456.1" y="192.9" width="43.2" height="25.8" fill="#eeeeee" stroke="#d9d9d9" stroke-width="0.6"/>
<rect x="-411.6" y="191.4" width="11.1" height="28.8" fill="#eeeeee" stroke="#d9d9d9" stroke-width="0.6"/>
<rect x="-400.0" y="189.9" width="12.0" height="31.8" fill="#eeeeee" stroke="#d9d9d9" stroke-width="0.6"/>
<rect x="-387.6" y="191.4" width="19.1" height="28.8" fill="#eeeeee" stroke="#d9d9d9" stroke-width="0.6"/>
<rect x="-368.0" y="189.9" width="30.0" height="31.8" fill="#eeeeee" stroke="#d9d9d9" stroke-width="0.6"/>
<rect x="-337.6" y="191.4" width="20.5" height="28.8" fill="#eeeeee" stroke="#d9d9d9" stroke-width="0.6"/>
<rect x="-336.0" y="196.3" width="10.7" height="15.9" fill="none" stroke="#d6d6d6" stroke-width="0.5"/>
<rect x="-583.0" y="221.7" width="20.0" height="35.2" fill="#e8e8e8" stroke="#d9d9d9" stroke-width="0.6"/>
<rect x="-563.0" y="221.7" width="20.0" height="35.2" fill="#ebebeb" stroke="#d9d9d9" stroke-width="0.6"/>
<rect x="-543.0" y="221.7" width="30.0" height="35.2" fill="#ebebeb" stroke="#d9d9d9" stroke-width="0.6"/>
<rect x="-512.1" y="224.7" width="36.2" height="29.2" fill="#ebebeb" stroke="#d9d9d9" stroke-width="0.6"/>
<rect x="-474.1" y="224.7" width="53.2" height="29.2" fill="#ebebeb" stroke="#d9d9d9" stroke-width="0.6"/>
<rect x="-473.0" y="228.8" width="27.5" height="17.6" fill="none" stroke="#d6d6d6" stroke-width="0.5"/>
<rect x="-419.6" y="223.2" width="44.1" height="32.2" fill="#ebebeb" stroke="#d9d9d9" stroke-width="0.6"/>
<rect x="-375.0" y="221.7" width="25.0" height="35.2" fill="#ebebeb" stroke="#d9d9d9" stroke-width="0.6"/>
<rect x="-350.0" y="221.7" width="33.4" height="35.2" fill="#ebebeb" stroke="#d9d9d9" stroke-width="0.6"/>
<polygon points="-285.6,188.9 -209.1,188.9 -194.6,257.9 -285.6,257.9" fill="#ebebeb" stroke="#dadada" stroke-width=".7"/>
<polygon points="-185.1,188.9 -16.5,188.9 -16.5,257.9 -170.6,257.9" fill="#ebebeb" stroke="#dadada" stroke-width=".7"/>
<path d="M-142.2 188.9V257.9" stroke="#d9d9d9" stroke-width=".6"/>
<path d="M-118.8 188.9V257.9" stroke="#d9d9d9" stroke-width=".6"/>
<path d="M-89.5 188.9V257.9" stroke="#d9d9d9" stroke-width=".6"/>
<path d="M-64.9 188.9V257.9" stroke="#d9d9d9" stroke-width=".6"/>
<path d="M-45.7 188.9V257.9" stroke="#d9d9d9" stroke-width=".6"/>
<path d="M-177.1 223.4H-16.5" stroke="#d9d9d9" stroke-width=".6"/>
<rect x="16.5" y="188.9" width="317.3" height="69.0" fill="#ebebeb" stroke="#dcdcdc" stroke-width="0.7"/>
<rect x="17.5" y="189.9" width="16.0" height="32.1" fill="#ebebeb" stroke="#d9d9d9" stroke-width="0.6"/>
<rect x="33.5" y="189.9" width="25.0" height="32.1" fill="#ebebeb" stroke="#d9d9d9" stroke-width="0.6"/>
<rect x="59.4" y="192.9" width="43.2" height="26.1" fill="#ebebeb" stroke="#d9d9d9" stroke-width="0.6"/>
<rect x="103.5" y="189.9" width="55.0" height="32.1" fill="#ebebeb" stroke="#d9d9d9" stroke-width="0.6"/>
<rect x="158.5" y="189.9" width="25.0" height="32.1" fill="#eeeeee" stroke="#d9d9d9" stroke-width="0.6"/>
<rect x="183.9" y="191.4" width="24.1" height="29.1" fill="#eeeeee" stroke="#d9d9d9" stroke-width="0.6"/>
<rect x="208.5" y="189.9" width="38.0" height="32.1" fill="#ebebeb" stroke="#d9d9d9" stroke-width="0.6"/>
<rect x="246.5" y="189.9" width="25.0" height="32.1" fill="#ebebeb" stroke="#d9d9d9" stroke-width="0.6"/>
<rect x="271.9" y="191.4" width="19.1" height="29.1" fill="#eeeeee" stroke="#d9d9d9" stroke-width="0.6"/>
<rect x="273.5" y="196.3" width="10.0" height="16.0" fill="none" stroke="#d6d6d6" stroke-width="0.5"/>
<rect x="291.5" y="189.9" width="30.0" height="32.1" fill="#ebebeb" stroke="#d9d9d9" stroke-width="0.6"/>
<rect x="321.5" y="189.9" width="11.3" height="32.1" fill="#ebebeb" stroke="#d9d9d9" stroke-width="0.6"/>
<rect x="323.5" y="196.3" width="5.7" height="16.0" fill="none" stroke="#d6d6d6" stroke-width="0.5"/>
<rect x="17.5" y="222.0" width="16.0" height="34.9" fill="#ebebeb" stroke="#d9d9d9" stroke-width="0.6"/>
<rect x="33.5" y="222.0" width="45.0" height="34.9" fill="#ebebeb" stroke="#d9d9d9" stroke-width="0.6"/>
<rect x="35.5" y="228.9" width="22.5" height="17.5" fill="none" stroke="#d6d6d6" stroke-width="0.5"/>
<rect x="78.5" y="222.0" width="30.0" height="34.9" fill="#e8e8e8" stroke="#d9d9d9" stroke-width="0.6"/>
<rect x="109.0" y="223.5" width="44.1" height="31.9" fill="#ebebeb" stroke="#d9d9d9" stroke-width="0.6"/>
<rect x="153.5" y="222.0" width="16.0" height="34.9" fill="#ebebeb" stroke="#d9d9d9" stroke-width="0.6"/>
<rect x="169.9" y="223.5" width="44.1" height="31.9" fill="#ebebeb" stroke="#d9d9d9" stroke-width="0.6"/>
<rect x="214.5" y="222.0" width="30.0" height="34.9" fill="#ebebeb" stroke="#d9d9d9" stroke-width="0.6"/>
<rect x="244.5" y="222.0" width="16.0" height="34.9" fill="#e8e8e8" stroke="#d9d9d9" stroke-width="0.6"/>
<rect x="260.9" y="223.5" width="44.1" height="31.9" fill="#ebebeb" stroke="#d9d9d9" stroke-width="0.6"/>
<rect x="305.5" y="222.0" width="27.3" height="34.9" fill="#ebebeb" stroke="#d9d9d9" stroke-width="0.6"/>
<rect x="163.9" y="191.9" width="3.0" height="63.0" fill="#dddddd" stroke="none" stroke-width="0.7"/>
<rect x="365.8" y="188.9" width="137.4" height="69.0" fill="#ebebeb" stroke="#dcdcdc" stroke-width="0.7"/>
<rect x="367.7" y="192.9" width="28.2" height="32.4" fill="#ebebeb" stroke="#d9d9d9" stroke-width="0.6"/>
<rect x="396.8" y="189.9" width="45.0" height="38.4" fill="#ebebeb" stroke="#d9d9d9" stroke-width="0.6"/>
<rect x="442.2" y="191.4" width="29.1" height="35.4" fill="#e8e8e8" stroke="#d9d9d9" stroke-width="0.6"/>
<rect x="471.8" y="189.9" width="16.0" height="38.4" fill="#eeeeee" stroke="#d9d9d9" stroke-width="0.6"/>
<rect x="487.8" y="189.9" width="14.4" height="38.4" fill="#e8e8e8" stroke="#d9d9d9" stroke-width="0.6"/>
<rect x="489.8" y="197.6" width="7.2" height="19.2" fill="none" stroke="#d6d6d6" stroke-width="0.5"/>
<rect x="366.8" y="228.3" width="38.0" height="28.6" fill="#ebebeb" stroke="#d9d9d9" stroke-width="0.6"/>
<rect x="368.8" y="234.0" width="19.0" height="14.3" fill="none" stroke="#d6d6d6" stroke-width="0.5"/>
<rect x="404.8" y="228.3" width="38.0" height="28.6" fill="#ebebeb" stroke="#d9d9d9" stroke-width="0.6"/>
<rect x="443.2" y="229.8" width="37.1" height="25.6" fill="#ebebeb" stroke="#d9d9d9" stroke-width="0.6"/>
<rect x="480.8" y="228.3" width="21.4" height="28.6" fill="#eeeeee" stroke="#d9d9d9" stroke-width="0.6"/>
<rect x="525.2" y="188.9" width="140.8" height="69.0" fill="#ebebeb" stroke="#dcdcdc" stroke-width="0.7"/>
<rect x="526.2" y="189.9" width="45.0" height="38.8" fill="#e8e8e8" stroke="#d9d9d9" stroke-width="0.6"/>
<rect x="571.2" y="189.9" width="16.0" height="38.8" fill="#ebebeb" stroke="#d9d9d9" stroke-width="0.6"/>
<rect x="588.1" y="192.9" width="43.2" height="32.8" fill="#ebebeb" stroke="#d9d9d9" stroke-width="0.6"/>
<rect x="632.2" y="189.9" width="32.8" height="38.8" fill="#e8e8e8" stroke="#d9d9d9" stroke-width="0.6"/>
<rect x="526.2" y="228.7" width="45.0" height="28.2" fill="#ebebeb" stroke="#d9d9d9" stroke-width="0.6"/>
<rect x="528.2" y="234.3" width="22.5" height="14.1" fill="none" stroke="#d6d6d6" stroke-width="0.5"/>
<rect x="571.2" y="228.7" width="30.0" height="28.2" fill="#e8e8e8" stroke="#d9d9d9" stroke-width="0.6"/>
<rect x="601.2" y="228.7" width="20.0" height="28.2" fill="#ebebeb" stroke="#d9d9d9" stroke-width="0.6"/>
<rect x="621.2" y="228.7" width="12.0" height="28.2" fill="#ebebeb" stroke="#d9d9d9" stroke-width="0.6"/>
<rect x="633.2" y="228.7" width="16.0" height="28.2" fill="#ebebeb" stroke="#d9d9d9" stroke-width="0.6"/>
<rect x="650.1" y="231.7" width="14.0" height="22.2" fill="#ebebeb" stroke="#d9d9d9" stroke-width="0.6"/>
<rect x="-584.0" y="276.9" width="268.4" height="69.0" fill="#ebebeb" stroke="#dcdcdc" stroke-width="0.7"/>
<rect x="-583.0" y="277.9" width="30.0" height="33.6" fill="#ebebeb" stroke="#d9d9d9" stroke-width="0.6"/>
<rect x="-552.5" y="279.4" width="24.1" height="30.6" fill="#eeeeee" stroke="#d9d9d9" stroke-width="0.6"/>
<rect x="-527.5" y="279.4" width="24.1" height="30.6" fill="#eeeeee" stroke="#d9d9d9" stroke-width="0.6"/>
<rect x="-503.0" y="277.9" width="16.0" height="33.6" fill="#e8e8e8" stroke="#d9d9d9" stroke-width="0.6"/>
<rect x="-487.0" y="277.9" width="16.0" height="33.6" fill="#eeeeee" stroke="#d9d9d9" stroke-width="0.6"/>
<rect x="-470.1" y="280.9" width="18.2" height="27.6" fill="#e8e8e8" stroke="#d9d9d9" stroke-width="0.6"/>
<rect x="-451.0" y="277.9" width="16.0" height="33.6" fill="#e8e8e8" stroke="#d9d9d9" stroke-width="0.6"/>
<rect x="-435.0" y="277.9" width="16.0" height="33.6" fill="#e8e8e8" stroke="#d9d9d9" stroke-width="0.6"/>
<rect x="-419.0" y="277.9" width="12.0" height="33.6" fill="#e8e8e8" stroke="#d9d9d9" stroke-width="0.6"/>
<rect x="-406.6" y="279.4" width="11.1" height="30.6" fill="#e8e8e8" stroke="#d9d9d9" stroke-width="0.6"/>
<rect x="-394.1" y="280.9" width="23.2" height="27.6" fill="#ebebeb" stroke="#d9d9d9" stroke-width="0.6"/>
<rect x="-393.0" y="284.6" width="12.5" height="16.8" fill="none" stroke="#d6d6d6" stroke-width="0.5"/>
<rect x="-369.6" y="279.4" width="44.1" height="30.6" fill="#ebebeb" stroke="#d9d9d9" stroke-width="0.6"/>
<rect x="-324.1" y="280.9" width="6.6" height="27.6" fill="#eeeeee" stroke="#d9d9d9" stroke-width="0.6"/>
<rect x="-583.0" y="311.5" width="16.0" height="33.4" fill="#e8e8e8" stroke="#d9d9d9" stroke-width="0.6"/>
<rect x="-567.0" y="311.5" width="30.0" height="33.4" fill="#ebebeb" stroke="#d9d9d9" stroke-width="0.6"/>
<rect x="-565.0" y="318.2" width="15.0" height="16.7" fill="none" stroke="#d6d6d6" stroke-width="0.5"/>
<rect x="-537.0" y="311.5" width="55.0" height="33.4" fill="#e8e8e8" stroke="#d9d9d9" stroke-width="0.6"/>
<rect x="-482.0" y="311.5" width="38.0" height="33.4" fill="#e8e8e8" stroke="#d9d9d9" stroke-width="0.6"/>
<rect x="-480.0" y="318.2" width="19.0" height="16.7" fill="none" stroke="#d6d6d6" stroke-width="0.5"/>
<rect x="-443.1" y="314.5" width="10.2" height="27.4" fill="#ebebeb" stroke="#d9d9d9" stroke-width="0.6"/>
<rect x="-432.0" y="311.5" width="38.0" height="33.4" fill="#e8e8e8" stroke="#d9d9d9" stroke-width="0.6"/>
<rect x="-394.0" y="311.5" width="38.0" height="33.4" fill="#ebebeb" stroke="#d9d9d9" stroke-width="0.6"/>
<rect x="-355.1" y="314.5" width="23.2" height="27.4" fill="#eeeeee" stroke="#d9d9d9" stroke-width="0.6"/>
<rect x="-330.6" y="313.0" width="13.5" height="30.4" fill="#ebebeb" stroke="#d9d9d9" stroke-width="0.6"/>
<rect x="-419.6" y="279.9" width="3.0" height="63.0" fill="#dddddd" stroke="none" stroke-width="0.7"/>
<polygon points="-285.6,276.9 -190.7,276.9 -164.6,345.9 -285.6,345.9" fill="#ebebeb" stroke="#dadada" stroke-width=".7"/>
<polygon points="-166.7,276.9 -16.5,276.9 -16.5,345.9 -140.6,345.9" fill="#ebebeb" stroke="#dadada" stroke-width=".7"/>
<path d="M-121.3 276.9V345.9" stroke="#d9d9d9" stroke-width=".6"/>
<path d="M-101.8 276.9V345.9" stroke="#d9d9d9" stroke-width=".6"/>
<path d="M-73.9 276.9V345.9" stroke="#d9d9d9" stroke-width=".6"/>
<path d="M-55.9 276.9V345.9" stroke="#d9d9d9" stroke-width=".6"/>
<path d="M-33.8 276.9V345.9" stroke="#d9d9d9" stroke-width=".6"/>
<path d="M-158.7 311.4H-16.5" stroke="#d9d9d9" stroke-width=".6"/>
<rect x="16.5" y="276.9" width="317.3" height="69.0" fill="#ebebeb" stroke="#dcdcdc" stroke-width="0.7"/>
<rect x="17.5" y="277.9" width="12.0" height="30.4" fill="#ebebeb" stroke="#d9d9d9" stroke-width="0.6"/>
<rect x="29.5" y="277.9" width="38.0" height="30.4" fill="#ebebeb" stroke="#d9d9d9" stroke-width="0.6"/>
<rect x="67.5" y="277.9" width="30.0" height="30.4" fill="#e8e8e8" stroke="#d9d9d9" stroke-width="0.6"/>
<rect x="97.5" y="277.9" width="30.0" height="30.4" fill="#eeeeee" stroke="#d9d9d9" stroke-width="0.6"/>
<rect x="99.5" y="284.0" width="15.0" height="15.2" fill="none" stroke="#d6d6d6" stroke-width="0.5"/>
<rect x="127.5" y="277.9" width="25.0" height="30.4" fill="#ebebeb" stroke="#d9d9d9" stroke-width="0.6"/>
<rect x="129.5" y="284.0" width="12.5" height="15.2" fill="none" stroke="#d6d6d6" stroke-width="0.5"/>
<rect x="152.5" y="277.9" width="20.0" height="30.4" fill="#ebebeb" stroke="#d9d9d9" stroke-width="0.6"/>
<rect x="172.5" y="277.9" width="12.0" height="30.4" fill="#e8e8e8" stroke="#d9d9d9" stroke-width="0.6"/>
<rect x="184.5" y="277.9" width="16.0" height="30.4" fill="#eeeeee" stroke="#d9d9d9" stroke-width="0.6"/>
<rect x="200.5" y="277.9" width="12.0" height="30.4" fill="#eeeeee" stroke="#d9d9d9" stroke-width="0.6"/>
<rect x="212.9" y="279.4" width="11.1" height="27.4" fill="#e8e8e8" stroke="#d9d9d9" stroke-width="0.6"/>
<rect x="224.5" y="277.9" width="16.0" height="30.4" fill="#ebebeb" stroke="#d9d9d9" stroke-width="0.6"/>
<rect x="240.9" y="279.4" width="19.1" height="27.4" fill="#e8e8e8" stroke="#d9d9d9" stroke-width="0.6"/>
<rect x="260.5" y="277.9" width="16.0" height="30.4" fill="#e8e8e8" stroke="#d9d9d9" stroke-width="0.6"/>
<rect x="276.5" y="277.9" width="16.0" height="30.4" fill="#ebebeb" stroke="#d9d9d9" stroke-width="0.6"/>
<rect x="292.9" y="279.4" width="15.1" height="27.4" fill="#ebebeb" stroke="#d9d9d9" stroke-width="0.6"/>
<rect x="308.5" y="277.9" width="16.0" height="30.4" fill="#ebebeb" stroke="#d9d9d9" stroke-width="0.6"/>
<rect x="324.5" y="277.9" width="8.3" height="30.4" fill="#ebebeb" stroke="#d9d9d9" stroke-width="0.6"/>
<rect x="17.5" y="308.3" width="55.0" height="36.6" fill="#e8e8e8" stroke="#d9d9d9" stroke-width="0.6"/>
<rect x="73.0" y="309.8" width="44.1" height="33.6" fill="#ebebeb" stroke="#d9d9d9" stroke-width="0.6"/>
<rect x="118.0" y="309.8" width="44.1" height="33.6" fill="#eeeeee" stroke="#d9d9d9" stroke-width="0.6"/>
<rect x="119.5" y="315.6" width="22.5" height="18.3" fill="none" stroke="#d6d6d6" stroke-width="0.5"/>
<rect x="162.5" y="308.3" width="20.0" height="36.6" fill="#eeeeee" stroke="#d9d9d9" stroke-width="0.6"/>
<rect x="182.5" y="308.3" width="38.0" height="36.6" fill="#ebebeb" stroke="#d9d9d9" stroke-width="0.6"/>
<rect x="221.4" y="311.3" width="43.2" height="30.6" fill="#e8e8e8" stroke="#d9d9d9" stroke-width="0.6"/>
<rect x="266.4" y="311.3" width="53.2" height="30.6" fill="#ebebeb" stroke="#d9d9d9" stroke-width="0.6"/>
<rect x="320.5" y="308.3" width="12.3" height="36.6" fill="#ebebeb" stroke="#d9d9d9" stroke-width="0.6"/>
<rect x="129.7" y="279.9" width="3.0" height="63.0" fill="#dddddd" stroke="none" stroke-width="0.7"/>
<rect x="365.8" y="276.9" width="137.4" height="69.0" fill="#ebebeb" stroke="#dcdcdc" stroke-width="0.7"/>
<rect x="366.8" y="277.9" width="12.0" height="36.0" fill="#ebebeb" stroke="#d9d9d9" stroke-width="0.6"/>
<rect x="378.8" y="277.9" width="30.0" height="36.0" fill="#e8e8e8" stroke="#d9d9d9" stroke-width="0.6"/>
<rect x="408.8" y="277.9" width="45.0" height="36.0" fill="#eeeeee" stroke="#d9d9d9" stroke-width="0.6"/>
<rect x="454.2" y="279.4" width="47.5" height="33.0" fill="#eeeeee" stroke="#d9d9d9" stroke-width="0.6"/>
<rect x="366.8" y="313.9" width="16.0" height="31.0" fill="#ebebeb" stroke="#d9d9d9" stroke-width="0.6"/>
<rect x="383.7" y="316.9" width="14.2" height="25.0" fill="#ebebeb" stroke="#d9d9d9" stroke-width="0.6"/>
<rect x="399.7" y="316.9" width="10.2" height="25.0" fill="#ebebeb" stroke="#d9d9d9" stroke-width="0.6"/>
<rect x="411.2" y="315.4" width="54.1" height="28.0" fill="#ebebeb" stroke="#d9d9d9" stroke-width="0.6"/>
<rect x="465.8" y="313.9" width="36.4" height="31.0" fill="#ebebeb" stroke="#d9d9d9" stroke-width="0.6"/>
<rect x="474.6" y="279.9" width="3.0" height="63.0" fill="#dddddd" stroke="none" stroke-width="0.7"/>
<rect x="525.2" y="276.9" width="140.8" height="69.0" fill="#ebebeb" stroke="#dcdcdc" stroke-width="0.7"/>
<rect x="526.2" y="277.9" width="38.0" height="37.4" fill="#ebebeb" stroke="#d9d9d9" stroke-width="0.6"/>
<rect x="564.2" y="277.9" width="20.0" height="37.4" fill="#ebebeb" stroke="#d9d9d9" stroke-width="0.6"/>
<rect x="584.2" y="277.9" width="30.0" height="37.4" fill="#eeeeee" stroke="#d9d9d9" stroke-width="0.6"/>
<rect x="586.2" y="285.4" width="15.0" height="18.7" fill="none" stroke="#d6d6d6" stroke-width="0.5"/>
<rect x="614.2" y="277.9" width="38.0" height="37.4" fill="#ebebeb" stroke="#d9d9d9" stroke-width="0.6"/>
<rect x="652.2" y="277.9" width="12.8" height="37.4" fill="#ebebeb" stroke="#d9d9d9" stroke-width="0.6"/>
<rect x="526.7" y="316.8" width="19.1" height="26.6" fill="#ebebeb" stroke="#d9d9d9" stroke-width="0.6"/>
<rect x="528.2" y="321.2" width="10.0" height="14.8" fill="none" stroke="#d6d6d6" stroke-width="0.5"/>
<rect x="546.2" y="315.3" width="12.0" height="29.6" fill="#ebebeb" stroke="#d9d9d9" stroke-width="0.6"/>
<rect x="558.2" y="315.3" width="20.0" height="29.6" fill="#e8e8e8" stroke="#d9d9d9" stroke-width="0.6"/>
<rect x="578.2" y="315.3" width="20.0" height="29.6" fill="#eeeeee" stroke="#d9d9d9" stroke-width="0.6"/>
<rect x="599.1" y="318.3" width="18.2" height="23.6" fill="#eeeeee" stroke="#d9d9d9" stroke-width="0.6"/>
<rect x="618.2" y="315.3" width="30.0" height="29.6" fill="#ebebeb" stroke="#d9d9d9" stroke-width="0.6"/>
<rect x="648.2" y="315.3" width="16.8" height="29.6" fill="#eeeeee" stroke="#d9d9d9" stroke-width="0.6"/>
<rect x="-584.0" y="364.9" width="268.4" height="69.0" fill="#ebebeb" stroke="#dcdcdc" stroke-width="0.7"/>
<rect x="-583.0" y="365.9" width="25.0" height="31.8" fill="#eeeeee" stroke="#d9d9d9" stroke-width="0.6"/>
<rect x="-558.0" y="365.9" width="38.0" height="31.8" fill="#ebebeb" stroke="#d9d9d9" stroke-width="0.6"/>
<rect x="-520.0" y="365.9" width="16.0" height="31.8" fill="#eeeeee" stroke="#d9d9d9" stroke-width="0.6"/>
<rect x="-503.1" y="368.9" width="10.2" height="25.8" fill="#ebebeb" stroke="#d9d9d9" stroke-width="0.6"/>
<rect x="-492.0" y="365.9" width="25.0" height="31.8" fill="#ebebeb" stroke="#d9d9d9" stroke-width="0.6"/>
<rect x="-467.0" y="365.9" width="20.0" height="31.8" fill="#ebebeb" stroke="#d9d9d9" stroke-width="0.6"/>
<rect x="-447.0" y="365.9" width="45.0" height="31.8" fill="#eeeeee" stroke="#d9d9d9" stroke-width="0.6"/>
<rect x="-401.1" y="368.9" width="14.2" height="25.8" fill="#e8e8e8" stroke="#d9d9d9" stroke-width="0.6"/>
<rect x="-386.0" y="365.9" width="16.0" height="31.8" fill="#eeeeee" stroke="#d9d9d9" stroke-width="0.6"/>
<rect x="-369.6" y="367.4" width="24.1" height="28.8" fill="#ebebeb" stroke="#d9d9d9" stroke-width="0.6"/>
<rect x="-344.6" y="367.4" width="27.5" height="28.8" fill="#ebebeb" stroke="#d9d9d9" stroke-width="0.6"/>
<rect x="-343.0" y="372.3" width="14.2" height="15.9" fill="none" stroke="#d6d6d6" stroke-width="0.5"/>
<rect x="-583.0" y="397.7" width="16.0" height="35.2" fill="#ebebeb" stroke="#d9d9d9" stroke-width="0.6"/>
<rect x="-567.0" y="397.7" width="25.0" height="35.2" fill="#ebebeb" stroke="#d9d9d9" stroke-width="0.6"/>
<rect x="-542.0" y="397.7" width="20.0" height="35.2" fill="#e8e8e8" stroke="#d9d9d9" stroke-width="0.6"/>
<rect x="-522.0" y="397.7" width="38.0" height="35.2" fill="#ebebeb" stroke="#d9d9d9" stroke-width="0.6"/>
<rect x="-484.0" y="397.7" width="20.0" height="35.2" fill="#ebebeb" stroke="#d9d9d9" stroke-width="0.6"/>
<rect x="-482.0" y="404.8" width="10.0" height="17.6" fill="none" stroke="#d6d6d6" stroke-width="0.5"/>
<rect x="-463.6" y="399.2" width="29.1" height="32.2" fill="#ebebeb" stroke="#d9d9d9" stroke-width="0.6"/>
<rect x="-462.0" y="404.8" width="15.0" height="17.6" fill="none" stroke="#d6d6d6" stroke-width="0.5"/>
<rect x="-433.1" y="400.7" width="18.2" height="29.2" fill="#eeeeee" stroke="#d9d9d9" stroke-width="0.6"/>
<rect x="-414.0" y="397.7" width="16.0" height="35.2" fill="#ebebeb" stroke="#d9d9d9" stroke-width="0.6"/>
<rect x="-412.0" y="404.8" width="8.0" height="17.6" fill="none" stroke="#d6d6d6" stroke-width="0.5"/>
<rect x="-398.0" y="397.7" width="25.0" height="35.2" fill="#e8e8e8" stroke="#d9d9d9" stroke-width="0.6"/>
<rect x="-373.0" y="397.7" width="38.0" height="35.2" fill="#ebebeb" stroke="#d9d9d9" stroke-width="0.6"/>
<rect x="-335.0" y="397.7" width="18.4" height="35.2" fill="#ebebeb" stroke="#d9d9d9" stroke-width="0.6"/>
<polygon points="-285.6,364.9 -156.8,364.9 -128.3,433.9 -285.6,433.9" fill="#ebebeb" stroke="#dadada" stroke-width=".7"/>
<polygon points="-132.8,364.9 -16.5,364.9 -16.5,433.9 -104.3,433.9" fill="#ebebeb" stroke="#dadada" stroke-width=".7"/>
<path d="M-91.3 364.9V433.9" stroke="#d9d9d9" stroke-width=".6"/>
<path d="M-73.3 364.9V433.9" stroke="#d9d9d9" stroke-width=".6"/>
<path d="M-60.8 364.9V433.9" stroke="#d9d9d9" stroke-width=".6"/>
<path d="M-48.4 364.9V433.9" stroke="#d9d9d9" stroke-width=".6"/>
<path d="M-27.3 364.9V433.9" stroke="#d9d9d9" stroke-width=".6"/>
<path d="M-124.8 399.4H-16.5" stroke="#d9d9d9" stroke-width=".6"/>
<rect x="16.5" y="364.9" width="317.3" height="69.0" fill="#ebebeb" stroke="#dcdcdc" stroke-width="0.7"/>
<rect x="17.5" y="365.9" width="20.0" height="30.0" fill="#ebebeb" stroke="#d9d9d9" stroke-width="0.6"/>
<rect x="37.5" y="365.9" width="25.0" height="30.0" fill="#ebebeb" stroke="#d9d9d9" stroke-width="0.6"/>
<rect x="63.4" y="368.9" width="28.2" height="24.0" fill="#eeeeee" stroke="#d9d9d9" stroke-width="0.6"/>
<rect x="92.5" y="365.9" width="12.0" height="30.0" fill="#ebebeb" stroke="#d9d9d9" stroke-width="0.6"/>
<rect x="104.5" y="365.9" width="30.0" height="30.0" fill="#eeeeee" stroke="#d9d9d9" stroke-width="0.6"/>
<rect x="134.5" y="365.9" width="25.0" height="30.0" fill="#ebebeb" stroke="#d9d9d9" stroke-width="0.6"/>
<rect x="159.5" y="365.9" width="16.0" height="30.0" fill="#eeeeee" stroke="#d9d9d9" stroke-width="0.6"/>
<rect x="176.4" y="368.9" width="10.2" height="24.0" fill="#e8e8e8" stroke="#d9d9d9" stroke-width="0.6"/>
<rect x="187.5" y="365.9" width="38.0" height="30.0" fill="#ebebeb" stroke="#d9d9d9" stroke-width="0.6"/>
<rect x="225.9" y="367.4" width="44.1" height="27.0" fill="#ebebeb" stroke="#d9d9d9" stroke-width="0.6"/>
<rect x="270.5" y="365.9" width="25.0" height="30.0" fill="#ebebeb" stroke="#d9d9d9" stroke-width="0.6"/>
<rect x="296.4" y="368.9" width="35.5" height="24.0" fill="#eeeeee" stroke="#d9d9d9" stroke-width="0.6"/>
<rect x="17.5" y="395.9" width="16.0" height="37.0" fill="#e8e8e8" stroke="#d9d9d9" stroke-width="0.6"/>
<rect x="19.5" y="403.3" width="8.0" height="18.5" fill="none" stroke="#d6d6d6" stroke-width="0.5"/>
<rect x="33.5" y="395.9" width="12.0" height="37.0" fill="#e8e8e8" stroke="#d9d9d9" stroke-width="0.6"/>
<rect x="45.5" y="395.9" width="20.0" height="37.0" fill="#ebebeb" stroke="#d9d9d9" stroke-width="0.6"/>
<rect x="65.5" y="395.9" width="55.0" height="37.0" fill="#ebebeb" stroke="#d9d9d9" stroke-width="0.6"/>
<rect x="120.5" y="395.9" width="20.0" height="37.0" fill="#ebebeb" stroke="#d9d9d9" stroke-width="0.6"/>
<rect x="140.5" y="395.9" width="25.0" height="37.0" fill="#ebebeb" stroke="#d9d9d9" stroke-width="0.6"/>
<rect x="165.5" y="395.9" width="25.0" height="37.0" fill="#e8e8e8" stroke="#d9d9d9" stroke-width="0.6"/>
<rect x="190.5" y="395.9" width="16.0" height="37.0" fill="#ebebeb" stroke="#d9d9d9" stroke-width="0.6"/>
<rect x="206.5" y="395.9" width="16.0" height="37.0" fill="#ebebeb" stroke="#d9d9d9" stroke-width="0.6"/>
<rect x="222.5" y="395.9" width="16.0" height="37.0" fill="#ebebeb" stroke="#d9d9d9" stroke-width="0.6"/>
<rect x="239.4" y="398.9" width="14.2" height="31.0" fill="#ebebeb" stroke="#d9d9d9" stroke-width="0.6"/>
<rect x="254.5" y="395.9" width="55.0" height="37.0" fill="#eeeeee" stroke="#d9d9d9" stroke-width="0.6"/>
<rect x="309.5" y="395.9" width="23.3" height="37.0" fill="#ebebeb" stroke="#d9d9d9" stroke-width="0.6"/>
<rect x="311.5" y="403.3" width="11.7" height="18.5" fill="none" stroke="#d6d6d6" stroke-width="0.5"/>
<rect x="224.8" y="367.9" width="3.0" height="63.0" fill="#dddddd" stroke="none" stroke-width="0.7"/>
<rect x="365.8" y="364.9" width="137.4" height="69.0" fill="#ebebeb" stroke="#dcdcdc" stroke-width="0.7"/>
<rect x="366.8" y="365.9" width="20.0" height="38.0" fill="#ebebeb" stroke="#d9d9d9" stroke-width="0.6"/>
<rect x="387.2" y="367.4" width="15.1" height="35.0" fill="#ebebeb" stroke="#d9d9d9" stroke-width="0.6"/>
<rect x="403.7" y="368.9" width="53.2" height="32.0" fill="#ebebeb" stroke="#d9d9d9" stroke-width="0.6"/>
<rect x="457.8" y="365.9" width="44.4" height="38.0" fill="#e8e8e8" stroke="#d9d9d9" stroke-width="0.6"/>
<rect x="367.2" y="405.4" width="54.1" height="26.0" fill="#ebebeb" stroke="#d9d9d9" stroke-width="0.6"/>
<rect x="421.8" y="403.9" width="45.0" height="29.0" fill="#eeeeee" stroke="#d9d9d9" stroke-width="0.6"/>
<rect x="467.2" y="405.4" width="11.1" height="26.0" fill="#ebebeb" stroke="#d9d9d9" stroke-width="0.6"/>
<rect x="478.8" y="403.9" width="23.4" height="29.0" fill="#ebebeb" stroke="#d9d9d9" stroke-width="0.6"/>
<rect x="525.2" y="364.9" width="140.8" height="69.0" fill="#ebebeb" stroke="#dcdcdc" stroke-width="0.7"/>
<rect x="526.2" y="365.9" width="16.0" height="33.5" fill="#e8e8e8" stroke="#d9d9d9" stroke-width="0.6"/>
<rect x="542.2" y="365.9" width="12.0" height="33.5" fill="#ebebeb" stroke="#d9d9d9" stroke-width="0.6"/>
<rect x="555.1" y="368.9" width="36.2" height="27.5" fill="#ebebeb" stroke="#d9d9d9" stroke-width="0.6"/>
<rect x="593.1" y="368.9" width="53.2" height="27.5" fill="#ebebeb" stroke="#d9d9d9" stroke-width="0.6"/>
<rect x="647.2" y="365.9" width="17.8" height="33.5" fill="#ebebeb" stroke="#d9d9d9" stroke-width="0.6"/>
<rect x="527.1" y="402.4" width="43.2" height="27.5" fill="#e8e8e8" stroke="#d9d9d9" stroke-width="0.6"/>
<rect x="571.7" y="400.9" width="29.1" height="30.5" fill="#ebebeb" stroke="#d9d9d9" stroke-width="0.6"/>
<rect x="602.1" y="402.4" width="18.2" height="27.5" fill="#e8e8e8" stroke="#d9d9d9" stroke-width="0.6"/>
<rect x="621.2" y="399.4" width="30.0" height="33.5" fill="#ebebeb" stroke="#d9d9d9" stroke-width="0.6"/>
<rect x="651.2" y="399.4" width="13.8" height="33.5" fill="#ebebeb" stroke="#d9d9d9" stroke-width="0.6"/>
<rect x="611.4" y="367.9" width="3.0" height="63.0" fill="#dddddd" stroke="none" stroke-width="0.7"/>
<rect x="-584.0" y="452.9" width="268.4" height="69.0" fill="#ebebeb" stroke="#dcdcdc" stroke-width="0.7"/>
<rect x="-582.1" y="456.9" width="14.2" height="25.9" fill="#e8e8e8" stroke="#d9d9d9" stroke-width="0.6"/>
<rect x="-566.5" y="455.4" width="11.1" height="28.9" fill="#e8e8e8" stroke="#d9d9d9" stroke-width="0.6"/>
<rect x="-555.0" y="453.9" width="55.0" height="31.9" fill="#ebebeb" stroke="#d9d9d9" stroke-width="0.6"/>
<rect x="-500.0" y="453.9" width="55.0" height="31.9" fill="#ebebeb" stroke="#d9d9d9" stroke-width="0.6"/>
<rect x="-444.6" y="455.4" width="29.1" height="28.9" fill="#eeeeee" stroke="#d9d9d9" stroke-width="0.6"/>
<rect x="-443.0" y="460.3" width="15.0" height="15.9" fill="none" stroke="#d6d6d6" stroke-width="0.5"/>
<rect x="-415.0" y="453.9" width="30.0" height="31.9" fill="#ebebeb" stroke="#d9d9d9" stroke-width="0.6"/>
<rect x="-385.0" y="453.9" width="45.0" height="31.9" fill="#ebebeb" stroke="#d9d9d9" stroke-width="0.6"/>
<rect x="-340.0" y="453.9" width="23.4" height="31.9" fill="#e8e8e8" stroke="#d9d9d9" stroke-width="0.6"/>
<rect x="-582.5" y="487.3" width="15.1" height="32.1" fill="#e8e8e8" stroke="#d9d9d9" stroke-width="0.6"/>
<rect x="-566.1" y="488.8" width="36.2" height="29.1" fill="#eeeeee" stroke="#d9d9d9" stroke-width="0.6"/>
<rect x="-528.5" y="487.3" width="24.1" height="32.1" fill="#ebebeb" stroke="#d9d9d9" stroke-width="0.6"/>
<rect x="-504.0" y="485.8" width="20.0" height="35.1" fill="#ebebeb" stroke="#d9d9d9" stroke-width="0.6"/>
<rect x="-483.6" y="487.3" width="19.1" height="32.1" fill="#ebebeb" stroke="#d9d9d9" stroke-width="0.6"/>
<rect x="-464.0" y="485.8" width="25.0" height="35.1" fill="#ebebeb" stroke="#d9d9d9" stroke-width="0.6"/>
<rect x="-438.1" y="488.8" width="36.2" height="29.1" fill="#e8e8e8" stroke="#d9d9d9" stroke-width="0.6"/>
<rect x="-401.0" y="485.8" width="45.0" height="35.1" fill="#ebebeb" stroke="#d9d9d9" stroke-width="0.6"/>
<rect x="-399.0" y="492.8" width="22.5" height="17.6" fill="none" stroke="#d6d6d6" stroke-width="0.5"/>
<rect x="-356.0" y="485.8" width="30.0" height="35.1" fill="#e8e8e8" stroke="#d9d9d9" stroke-width="0.6"/>
<rect x="-326.0" y="485.8" width="9.4" height="35.1" fill="#eeeeee" stroke="#d9d9d9" stroke-width="0.6"/>
<polygon points="-285.6,452.9 -120.4,452.9 -91.9,521.9 -285.6,521.9" fill="#ebebeb" stroke="#dadada" stroke-width=".7"/>
<polygon points="-96.4,452.9 -16.5,452.9 -16.5,521.9 -67.9,521.9" fill="#ebebeb" stroke="#dadada" stroke-width=".7"/>
<path d="M-60.0 452.9V521.9" stroke="#d9d9d9" stroke-width=".6"/>
<path d="M-51.7 452.9V521.9" stroke="#d9d9d9" stroke-width=".6"/>
<path d="M-43.3 452.9V521.9" stroke="#d9d9d9" stroke-width=".6"/>
<path d="M-31.1 452.9V521.9" stroke="#d9d9d9" stroke-width=".6"/>
<path d="M-30.0 452.9V521.9" stroke="#d9d9d9" stroke-width=".6"/>
<path d="M-88.4 487.4H-16.5" stroke="#d9d9d9" stroke-width=".6"/>
<rect x="16.5" y="452.9" width="317.3" height="69.0" fill="#ebebeb" stroke="#dcdcdc" stroke-width="0.7"/>
<rect x="17.5" y="453.9" width="55.0" height="31.0" fill="#e8e8e8" stroke="#d9d9d9" stroke-width="0.6"/>
<rect x="72.5" y="453.9" width="38.0" height="31.0" fill="#ebebeb" stroke="#d9d9d9" stroke-width="0.6"/>
<rect x="110.5" y="453.9" width="55.0" height="31.0" fill="#ebebeb" stroke="#d9d9d9" stroke-width="0.6"/>
<rect x="166.4" y="456.9" width="14.2" height="25.0" fill="#ebebeb" stroke="#d9d9d9" stroke-width="0.6"/>
<rect x="181.5" y="453.9" width="55.0" height="31.0" fill="#ebebeb" stroke="#d9d9d9" stroke-width="0.6"/>
<rect x="183.5" y="460.1" width="27.5" height="15.5" fill="none" stroke="#d6d6d6" stroke-width="0.5"/>
<rect x="236.5" y="453.9" width="30.0" height="31.0" fill="#ebebeb" stroke="#d9d9d9" stroke-width="0.6"/>
<rect x="266.5" y="453.9" width="12.0" height="31.0" fill="#ebebeb" stroke="#d9d9d9" stroke-width="0.6"/>
<rect x="278.5" y="453.9" width="30.0" height="31.0" fill="#e8e8e8" stroke="#d9d9d9" stroke-width="0.6"/>
<rect x="309.4" y="456.9" width="22.5" height="25.0" fill="#ebebeb" stroke="#d9d9d9" stroke-width="0.6"/>
<rect x="17.5" y="484.9" width="16.0" height="36.0" fill="#ebebeb" stroke="#d9d9d9" stroke-width="0.6"/>
<rect x="34.4" y="487.9" width="10.2" height="30.0" fill="#e8e8e8" stroke="#d9d9d9" stroke-width="0.6"/>
<rect x="45.5" y="484.9" width="25.0" height="36.0" fill="#eeeeee" stroke="#d9d9d9" stroke-width="0.6"/>
<rect x="70.5" y="484.9" width="38.0" height="36.0" fill="#e8e8e8" stroke="#d9d9d9" stroke-width="0.6"/>
<rect x="109.4" y="487.9" width="36.2" height="30.0" fill="#ebebeb" stroke="#d9d9d9" stroke-width="0.6"/>
<rect x="146.9" y="486.4" width="44.1" height="33.0" fill="#ebebeb" stroke="#d9d9d9" stroke-width="0.6"/>
<rect x="191.5" y="484.9" width="55.0" height="36.0" fill="#ebebeb" stroke="#d9d9d9" stroke-width="0.6"/>
<rect x="247.4" y="487.9" width="53.2" height="30.0" fill="#e8e8e8" stroke="#d9d9d9" stroke-width="0.6"/>
<rect x="302.4" y="487.9" width="29.5" height="30.0" fill="#eeeeee" stroke="#d9d9d9" stroke-width="0.6"/>
<rect x="96.6" y="455.9" width="3.0" height="63.0" fill="#dddddd" stroke="none" stroke-width="0.7"/>
<rect x="365.8" y="452.9" width="137.4" height="69.0" fill="#ebebeb" stroke="#dcdcdc" stroke-width="0.7"/>
<rect x="366.8" y="453.9" width="12.0" height="30.1" fill="#eeeeee" stroke="#d9d9d9" stroke-width="0.6"/>
<rect x="378.8" y="453.9" width="30.0" height="30.1" fill="#eeeeee" stroke="#d9d9d9" stroke-width="0.6"/>
<rect x="409.2" y="455.4" width="11.1" height="27.1" fill="#ebebeb" stroke="#d9d9d9" stroke-width="0.6"/>
<rect x="410.8" y="459.9" width="6.0" height="15.0" fill="none" stroke="#d6d6d6" stroke-width="0.5"/>
<rect x="420.8" y="453.9" width="16.0" height="30.1" fill="#e8e8e8" stroke="#d9d9d9" stroke-width="0.6"/>
<rect x="436.8" y="453.9" width="12.0" height="30.1" fill="#eeeeee" stroke="#d9d9d9" stroke-width="0.6"/>
<rect x="438.8" y="459.9" width="6.0" height="15.0" fill="none" stroke="#d6d6d6" stroke-width="0.5"/>
<rect x="449.2" y="455.4" width="52.5" height="27.1" fill="#eeeeee" stroke="#d9d9d9" stroke-width="0.6"/>
<rect x="367.7" y="487.0" width="43.2" height="30.9" fill="#e8e8e8" stroke="#d9d9d9" stroke-width="0.6"/>
<rect x="411.8" y="484.0" width="25.0" height="36.9" fill="#e8e8e8" stroke="#d9d9d9" stroke-width="0.6"/>
<rect x="436.8" y="484.0" width="45.0" height="36.9" fill="#ebebeb" stroke="#d9d9d9" stroke-width="0.6"/>
<rect x="481.8" y="484.0" width="20.4" height="36.9" fill="#ebebeb" stroke="#d9d9d9" stroke-width="0.6"/>
<rect x="424.9" y="455.9" width="3.0" height="63.0" fill="#dddddd" stroke="none" stroke-width="0.7"/>
<rect x="525.2" y="452.9" width="140.8" height="69.0" fill="#ebebeb" stroke="#dcdcdc" stroke-width="0.7"/>
<rect x="526.2" y="453.9" width="55.0" height="36.1" fill="#eeeeee" stroke="#d9d9d9" stroke-width="0.6"/>
<rect x="582.1" y="456.9" width="23.2" height="30.1" fill="#e8e8e8" stroke="#d9d9d9" stroke-width="0.6"/>
<rect x="606.2" y="453.9" width="16.0" height="36.1" fill="#ebebeb" stroke="#d9d9d9" stroke-width="0.6"/>
<rect x="608.2" y="461.1" width="8.0" height="18.1" fill="none" stroke="#d6d6d6" stroke-width="0.5"/>
<rect x="622.2" y="453.9" width="42.8" height="36.1" fill="#e8e8e8" stroke="#d9d9d9" stroke-width="0.6"/>
<rect x="526.7" y="491.5" width="15.1" height="27.9" fill="#ebebeb" stroke="#d9d9d9" stroke-width="0.6"/>
<rect x="542.7" y="491.5" width="44.1" height="27.9" fill="#ebebeb" stroke="#d9d9d9" stroke-width="0.6"/>
<rect x="587.2" y="490.0" width="25.0" height="30.9" fill="#eeeeee" stroke="#d9d9d9" stroke-width="0.6"/>
<rect x="612.2" y="490.0" width="30.0" height="30.9" fill="#eeeeee" stroke="#d9d9d9" stroke-width="0.6"/>
<rect x="642.7" y="491.5" width="21.9" height="27.9" fill="#eeeeee" stroke="#d9d9d9" stroke-width="0.6"/>
<rect x="-584.0" y="540.9" width="268.4" height="69.0" fill="#ebebeb" stroke="#dcdcdc" stroke-width="0.7"/>
<rect x="-583.0" y="541.9" width="45.0" height="33.5" fill="#ebebeb" stroke="#d9d9d9" stroke-width="0.6"/>
<rect x="-538.0" y="541.9" width="55.0" height="33.5" fill="#e8e8e8" stroke="#d9d9d9" stroke-width="0.6"/>
<rect x="-483.0" y="541.9" width="25.0" height="33.5" fill="#eeeeee" stroke="#d9d9d9" stroke-width="0.6"/>
<rect x="-457.6" y="543.4" width="37.1" height="30.5" fill="#eeeeee" stroke="#d9d9d9" stroke-width="0.6"/>
<rect x="-456.0" y="548.6" width="19.0" height="16.8" fill="none" stroke="#d6d6d6" stroke-width="0.5"/>
<rect x="-419.6" y="543.4" width="44.1" height="30.5" fill="#ebebeb" stroke="#d9d9d9" stroke-width="0.6"/>
<rect x="-374.6" y="543.4" width="44.1" height="30.5" fill="#ebebeb" stroke="#d9d9d9" stroke-width="0.6"/>
<rect x="-330.0" y="541.9" width="13.4" height="33.5" fill="#e8e8e8" stroke="#d9d9d9" stroke-width="0.6"/>
<rect x="-582.5" y="576.9" width="11.1" height="30.5" fill="#ebebeb" stroke="#d9d9d9" stroke-width="0.6"/>
<rect x="-581.0" y="582.1" width="6.0" height="16.7" fill="none" stroke="#d6d6d6" stroke-width="0.5"/>
<rect x="-570.1" y="578.4" width="36.2" height="27.5" fill="#ebebeb" stroke="#d9d9d9" stroke-width="0.6"/>
<rect x="-532.5" y="576.9" width="29.1" height="30.5" fill="#eeeeee" stroke="#d9d9d9" stroke-width="0.6"/>
<rect x="-502.1" y="578.4" width="10.2" height="27.5" fill="#ebebeb" stroke="#d9d9d9" stroke-width="0.6"/>
<rect x="-490.1" y="578.4" width="10.2" height="27.5" fill="#ebebeb" stroke="#d9d9d9" stroke-width="0.6"/>
<rect x="-479.0" y="575.4" width="55.0" height="33.5" fill="#ebebeb" stroke="#d9d9d9" stroke-width="0.6"/>
<rect x="-424.0" y="575.4" width="55.0" height="33.5" fill="#e8e8e8" stroke="#d9d9d9" stroke-width="0.6"/>
<rect x="-369.0" y="575.4" width="52.4" height="33.5" fill="#ebebeb" stroke="#d9d9d9" stroke-width="0.6"/>
<rect x="-445.0" y="543.9" width="3.0" height="63.0" fill="#dddddd" stroke="none" stroke-width="0.7"/>
<polygon points="-285.6,540.9 -84.1,540.9 -55.6,609.9 -285.6,609.9" fill="#ebebeb" stroke="#dadada" stroke-width=".7"/>
<polygon points="-60.1,540.9 -16.5,540.9 -16.5,609.9 -31.6,609.9" fill="#ebebeb" stroke="#dadada" stroke-width=".7"/>
<path d="M-24.1 540.9V609.9" stroke="#d9d9d9" stroke-width=".6"/>
<path d="M-25.9 540.9V609.9" stroke="#d9d9d9" stroke-width=".6"/>
<path d="M-19.5 540.9V609.9" stroke="#d9d9d9" stroke-width=".6"/>
<path d="M-23.0 540.9V609.9" stroke="#d9d9d9" stroke-width=".6"/>
<path d="M-16.4 540.9V609.9" stroke="#d9d9d9" stroke-width=".6"/>
<path d="M-52.1 575.4H-16.5" stroke="#d9d9d9" stroke-width=".6"/>
<rect x="16.5" y="540.9" width="317.3" height="69.0" fill="#ebebeb" stroke="#dcdcdc" stroke-width="0.7"/>
<rect x="17.5" y="541.9" width="30.0" height="28.9" fill="#eeeeee" stroke="#d9d9d9" stroke-width="0.6"/>
<rect x="47.5" y="541.9" width="25.0" height="28.9" fill="#e8e8e8" stroke="#d9d9d9" stroke-width="0.6"/>
<rect x="72.5" y="541.9" width="12.0" height="28.9" fill="#eeeeee" stroke="#d9d9d9" stroke-width="0.6"/>
<rect x="84.5" y="541.9" width="45.0" height="28.9" fill="#ebebeb" stroke="#d9d9d9" stroke-width="0.6"/>
<rect x="129.5" y="541.9" width="25.0" height="28.9" fill="#ebebeb" stroke="#d9d9d9" stroke-width="0.6"/>
<rect x="131.5" y="547.7" width="12.5" height="14.5" fill="none" stroke="#d6d6d6" stroke-width="0.5"/>
<rect x="154.5" y="541.9" width="16.0" height="28.9" fill="#ebebeb" stroke="#d9d9d9" stroke-width="0.6"/>
<rect x="171.4" y="544.9" width="53.2" height="22.9" fill="#ebebeb" stroke="#d9d9d9" stroke-width="0.6"/>
<rect x="172.5" y="547.7" width="27.5" height="14.5" fill="none" stroke="#d6d6d6" stroke-width="0.5"/>
<rect x="225.5" y="541.9" width="30.0" height="28.9" fill="#ebebeb" stroke="#d9d9d9" stroke-width="0.6"/>
<rect x="255.5" y="541.9" width="38.0" height="28.9" fill="#ebebeb" stroke="#d9d9d9" stroke-width="0.6"/>
<rect x="293.5" y="541.9" width="25.0" height="28.9" fill="#e8e8e8" stroke="#d9d9d9" stroke-width="0.6"/>
<rect x="295.5" y="547.7" width="12.5" height="14.5" fill="none" stroke="#d6d6d6" stroke-width="0.5"/>
<rect x="319.4" y="544.9" width="12.5" height="22.9" fill="#eeeeee" stroke="#d9d9d9" stroke-width="0.6"/>
<rect x="17.5" y="570.8" width="25.0" height="38.1" fill="#eeeeee" stroke="#d9d9d9" stroke-width="0.6"/>
<rect x="42.5" y="570.8" width="38.0" height="38.1" fill="#ebebeb" stroke="#d9d9d9" stroke-width="0.6"/>
<rect x="80.5" y="570.8" width="45.0" height="38.1" fill="#ebebeb" stroke="#d9d9d9" stroke-width="0.6"/>
<rect x="125.5" y="570.8" width="20.0" height="38.1" fill="#e8e8e8" stroke="#d9d9d9" stroke-width="0.6"/>
<rect x="145.5" y="570.8" width="38.0" height="38.1" fill="#ebebeb" stroke="#d9d9d9" stroke-width="0.6"/>
<rect x="183.5" y="570.8" width="25.0" height="38.1" fill="#e8e8e8" stroke="#d9d9d9" stroke-width="0.6"/>
<rect x="185.5" y="578.5" width="12.5" height="19.0" fill="none" stroke="#d6d6d6" stroke-width="0.5"/>
<rect x="208.5" y="570.8" width="55.0" height="38.1" fill="#ebebeb" stroke="#d9d9d9" stroke-width="0.6"/>
<rect x="263.5" y="570.8" width="12.0" height="38.1" fill="#ebebeb" stroke="#d9d9d9" stroke-width="0.6"/>
<rect x="265.5" y="578.5" width="6.0" height="19.0" fill="none" stroke="#d6d6d6" stroke-width="0.5"/>
<rect x="276.4" y="573.8" width="36.2" height="32.1" fill="#e8e8e8" stroke="#d9d9d9" stroke-width="0.6"/>
<rect x="313.5" y="570.8" width="19.3" height="38.1" fill="#ebebeb" stroke="#d9d9d9" stroke-width="0.6"/>
<rect x="365.8" y="540.9" width="137.4" height="69.0" fill="#ebebeb" stroke="#dcdcdc" stroke-width="0.7"/>
<rect x="366.8" y="541.9" width="30.0" height="34.7" fill="#ebebeb" stroke="#d9d9d9" stroke-width="0.6"/>
<rect x="397.2" y="543.4" width="37.1" height="31.7" fill="#ebebeb" stroke="#d9d9d9" stroke-width="0.6"/>
<rect x="434.8" y="541.9" width="25.0" height="34.7" fill="#eeeeee" stroke="#d9d9d9" stroke-width="0.6"/>
<rect x="459.8" y="541.9" width="42.4" height="34.7" fill="#ebebeb" stroke="#d9d9d9" stroke-width="0.6"/>
<rect x="366.8" y="576.6" width="30.0" height="32.3" fill="#ebebeb" stroke="#d9d9d9" stroke-width="0.6"/>
<rect x="368.8" y="583.1" width="15.0" height="16.1" fill="none" stroke="#d6d6d6" stroke-width="0.5"/>
<rect x="397.7" y="579.6" width="28.2" height="26.3" fill="#e8e8e8" stroke="#d9d9d9" stroke-width="0.6"/>
<rect x="426.8" y="576.6" width="20.0" height="32.3" fill="#ebebeb" stroke="#d9d9d9" stroke-width="0.6"/>
<rect x="446.8" y="576.6" width="55.4" height="32.3" fill="#eeeeee" stroke="#d9d9d9" stroke-width="0.6"/>
<rect x="525.2" y="540.9" width="140.8" height="69.0" fill="#ebebeb" stroke="#dcdcdc" stroke-width="0.7"/>
<rect x="526.2" y="541.9" width="55.0" height="36.2" fill="#eeeeee" stroke="#d9d9d9" stroke-width="0.6"/>
<rect x="582.1" y="544.9" width="43.2" height="30.2" fill="#ebebeb" stroke="#d9d9d9" stroke-width="0.6"/>
<rect x="627.1" y="544.9" width="37.0" height="30.2" fill="#eeeeee" stroke="#d9d9d9" stroke-width="0.6"/>
<rect x="526.2" y="578.1" width="25.0" height="30.8" fill="#ebebeb" stroke="#d9d9d9" stroke-width="0.6"/>
<rect x="551.2" y="578.1" width="45.0" height="30.8" fill="#ebebeb" stroke="#d9d9d9" stroke-width="0.6"/>
<rect x="596.2" y="578.1" width="30.0" height="30.8" fill="#eeeeee" stroke="#d9d9d9" stroke-width="0.6"/>
<rect x="626.7" y="579.6" width="37.9" height="27.8" fill="#ebebeb" stroke="#d9d9d9" stroke-width="0.6"/>
<rect x="628.2" y="584.3" width="19.4" height="15.4" fill="none" stroke="#d6d6d6" stroke-width="0.5"/>
<path d="M-900 -543.0H900M-900 -529.0H900" stroke="#e2e2e2" stroke-width=".6" stroke-dasharray="6 3"/>
<path d="M-900 -455.0H900M-900 -441.0H900" stroke="#e2e2e2" stroke-width=".6" stroke-dasharray="6 3"/>
<path d="M-900 -367.0H900M-900 -353.0H900" stroke="#e2e2e2" stroke-width=".6" stroke-dasharray="6 3"/>
<path d="M-900 -279.0H900M-900 -265.0H900" stroke="#e2e2e2" stroke-width=".6" stroke-dasharray="6 3"/>
<path d="M-900 -191.0H900M-900 -177.0H900" stroke="#e2e2e2" stroke-width=".6" stroke-dasharray="6 3"/>
<path d="M-900 -103.0H900M-900 -89.0H900" stroke="#e2e2e2" stroke-width=".6" stroke-dasharray="6 3"/>
<path d="M-900 -13.0H900M-900 13.0H900" stroke="#e2e2e2" stroke-width=".6" stroke-dasharray="6 3"/>
<path d="M-900 84.4H16.5M-900 98.4H16.5M333.8 84.4H900M333.8 98.4H900" stroke="#e2e2e2" stroke-width=".6" stroke-dasharray="6 3"/>
<path d="M-900 172.4H900M-900 186.4H900" stroke="#e2e2e2" stroke-width=".6" stroke-dasharray="6 3"/>
<path d="M-900 260.4H900M-900 274.4H900" stroke="#e2e2e2" stroke-width=".6" stroke-dasharray="6 3"/>
<path d="M-900 348.4H900M-900 362.4H900" stroke="#e2e2e2" stroke-width=".6" stroke-dasharray="6 3"/>
<path d="M-900 436.4H900M-900 450.4H900" stroke="#e2e2e2" stroke-width=".6" stroke-dasharray="6 3"/>
<path d="M-900 524.4H900M-900 538.4H900" stroke="#e2e2e2" stroke-width=".6" stroke-dasharray="6 3"/>
<path d="M-900 612.4H900M-900 626.4H900" stroke="#e2e2e2" stroke-width=".6" stroke-dasharray="6 3"/>
<path d="M-612.0 -900V900M-588.0 -900V900" stroke="#e2e2e2" stroke-width=".6" stroke-dasharray="6 3"/>
<path d="M-311.6 -900V900M-289.6 -900V900" stroke="#e2e2e2" stroke-width=".6" stroke-dasharray="6 3"/>
<path d="M-12.5 -900V900M12.5 -900V900" stroke="#e2e2e2" stroke-width=".6" stroke-dasharray="6 3"/>
<path d="M337.8 -900V900M361.8 -900V900" stroke="#e2e2e2" stroke-width=".6" stroke-dasharray="6 3"/>
<path d="M507.2 -900V900M521.2 -900V900" stroke="#e2e2e2" stroke-width=".6" stroke-dasharray="6 3"/>
<path d="M670.0 -900V900M690.0 -900V900" stroke="#e2e2e2" stroke-width=".6" stroke-dasharray="6 3"/>
<path d="M-425.8 -900L-176.1 289L76.2 900" stroke="#f8f8f7" stroke-width="22" fill="none"/>
<path d="M-425.8 -900L-176.1 289L76.2 900" transform="translate(-8,0)" stroke="#e0e0e0" stroke-width=".6" stroke-dasharray="6 3" fill="none"/>
<path d="M-425.8 -900L-176.1 289L76.2 900" transform="translate(8,0)" stroke="#e0e0e0" stroke-width=".6" stroke-dasharray="6 3" fill="none"/>
<path d="M-425.8 -900L-176.1 289L76.2 900" stroke="#ffffff" stroke-width="5" fill="none"/>
<rect x="-900.0" y="-539.0" width="1800.0" height="6.0" fill="#ffffff" stroke="none" stroke-width="0.7"/>
<rect x="-900.0" y="-451.0" width="1800.0" height="6.0" fill="#ffffff" stroke="none" stroke-width="0.7"/>
<rect x="-900.0" y="-363.0" width="1800.0" height="6.0" fill="#ffffff" stroke="none" stroke-width="0.7"/>
<rect x="-900.0" y="-275.0" width="1800.0" height="6.0" fill="#ffffff" stroke="none" stroke-width="0.7"/>
<rect x="-900.0" y="-187.0" width="1800.0" height="6.0" fill="#ffffff" stroke="none" stroke-width="0.7"/>
<rect x="-900.0" y="-99.0" width="1800.0" height="6.0" fill="#ffffff" stroke="none" stroke-width="0.7"/>
<rect x="-900.0" y="-4.7" width="1800.0" height="9.4" fill="#ffffff" stroke="none" stroke-width="0.7"/>
<rect x="-900.0" y="88.4" width="916.5" height="6.0" fill="#ffffff" stroke="none" stroke-width="0.7"/>
<rect x="333.8" y="88.4" width="900.0" height="6.0" fill="#ffffff" stroke="none" stroke-width="0.7"/>
<rect x="-900.0" y="176.4" width="1800.0" height="6.0" fill="#ffffff" stroke="none" stroke-width="0.7"/>
<rect x="-900.0" y="264.4" width="1800.0" height="6.0" fill="#ffffff" stroke="none" stroke-width="0.7"/>
<rect x="-900.0" y="352.4" width="1800.0" height="6.0" fill="#ffffff" stroke="none" stroke-width="0.7"/>
<rect x="-900.0" y="440.4" width="1800.0" height="6.0" fill="#ffffff" stroke="none" stroke-width="0.7"/>
<rect x="-900.0" y="528.4" width="1800.0" height="6.0" fill="#ffffff" stroke="none" stroke-width="0.7"/>
<rect x="-900.0" y="616.4" width="1800.0" height="6.0" fill="#ffffff" stroke="none" stroke-width="0.7"/>
<rect x="-604.3" y="-900.0" width="8.6" height="1800.0" fill="#ffffff" stroke="none" stroke-width="0.7"/>
<rect x="-304.9" y="-900.0" width="8.6" height="1800.0" fill="#ffffff" stroke="none" stroke-width="0.7"/>
<rect x="-4.3" y="-900.0" width="8.6" height="1800.0" fill="#ffffff" stroke="none" stroke-width="0.7"/>
<rect x="345.5" y="-900.0" width="8.6" height="1800.0" fill="#ffffff" stroke="none" stroke-width="0.7"/>
<rect x="511.2" y="-900.0" width="6.0" height="1800.0" fill="#ffffff" stroke="none" stroke-width="0.7"/>
<rect x="677.0" y="-900.0" width="6.0" height="1800.0" fill="#ffffff" stroke="none" stroke-width="0.7"/>
</g>
<path d="M892 170l44 20-20 40-46-20z" fill="#eef1ee"/>
<text x="917" y="202" text-anchor="middle" font-family="Liberation Sans" font-weight="bold" font-size="8.2" fill="#86a886">MARSH &amp; MCLENNAN</text>
<text x="917" y="213" text-anchor="middle" font-family="Liberation Sans" font-weight="bold" font-size="8.2" fill="#86a886">PUBLIC SPACE</text>
<g font-family="Liberation Sans"><text x="498" y="138" transform="rotate(-61 498 138)" text-anchor="middle" dominant-baseline="central" font-size="10.5" fill="#7e7e7e" letter-spacing="0.3" >7th Avenue</text><text x="707" y="133" transform="rotate(29 707 133)" text-anchor="middle" dominant-baseline="central" font-size="10.5" fill="#7e7e7e" letter-spacing="0.3" >W 45th St</text><text x="582" y="168" transform="rotate(29 582 168)" text-anchor="middle" dominant-baseline="central" font-size="10.5" fill="#7e7e7e" letter-spacing="0.3" >W 44th St</text><text x="534" y="241" transform="rotate(29 534 241)" text-anchor="middle" dominant-baseline="central" font-size="10.5" fill="#7e7e7e" letter-spacing="0.3" >W 43rd St</text><text x="930" y="259" transform="rotate(29 930 259)" text-anchor="middle" dominant-baseline="central" font-size="10.5" fill="#7e7e7e" letter-spacing="0.3" >W 45th St.</text><text x="1057" y="231" transform="rotate(29 1057 231)" text-anchor="middle" dominant-baseline="central" font-size="10.5" fill="#7e7e7e" letter-spacing="0.3" >W 46th St.</text><text x="1064" y="130.5" transform="rotate(29 1064 130.5)" text-anchor="middle" dominant-baseline="central" font-size="10.5" fill="#7e7e7e" letter-spacing="0.3" >W 47th St</text><text x="756" y="263" transform="rotate(29 756 263)" text-anchor="middle" dominant-baseline="central" font-size="10.5" fill="#7e7e7e" letter-spacing="0.3" >W 44th St</text><text x="328" y="340" transform="rotate(29 328 340)" text-anchor="middle" dominant-baseline="central" font-size="10.5" fill="#7e7e7e" letter-spacing="0.3" >W 41st St</text><text x="361" y="559" transform="rotate(29 361 559)" text-anchor="middle" dominant-baseline="central" font-size="10.5" fill="#7e7e7e" letter-spacing="0.3" >W 39th St</text><text x="616" y="601" transform="rotate(29 616 601)" text-anchor="middle" dominant-baseline="central" font-size="10.5" fill="#7e7e7e" letter-spacing="0.3" >W 40th St</text><text x="336" y="643" transform="rotate(29 336 643)" text-anchor="middle" dominant-baseline="central" font-size="10.5" fill="#7e7e7e" letter-spacing="0.3" >W 38th St</text><text x="507" y="741" transform="rotate(29 507 741)" text-anchor="middle" dominant-baseline="central" font-size="10.5" fill="#7e7e7e" letter-spacing="0.3" >W 38th St</text><text x="412" y="785" transform="rotate(29 412 785)" text-anchor="middle" dominant-baseline="central" font-size="10.5" fill="#7e7e7e" letter-spacing="0.3" >W 37th St</text><text x="790" y="698" transform="rotate(29 790 698)" text-anchor="middle" dominant-baseline="central" font-size="10.5" fill="#7e7e7e" letter-spacing="0.3" >W 40th St.</text><text x="712" y="752" transform="rotate(29 712 752)" text-anchor="middle" dominant-baseline="central" font-size="10.5" fill="#7e7e7e" letter-spacing="0.3" >W 39th St</text><text x="1120" y="566" transform="rotate(29 1120 566)" text-anchor="middle" dominant-baseline="central" font-size="10.5" fill="#7e7e7e" letter-spacing="0.3" >E 43rd</text><text x="403" y="275" transform="rotate(29 403 275)" text-anchor="middle" dominant-baseline="central" font-size="12.5" fill="#7e7e7e" letter-spacing="2.2" >W 42nd St.</text><text x="841" y="140" transform="rotate(-61 841 140)" text-anchor="middle" dominant-baseline="central" font-size="10.5" fill="#7e7e7e" letter-spacing="0.3" >6th Avenue</text><text x="744" y="313" transform="rotate(-61 744 313)" text-anchor="middle" dominant-baseline="central" font-size="10.5" fill="#7e7e7e" letter-spacing="0.3" >6th Avenue</text><text x="553" y="662" transform="rotate(-61 553 662)" text-anchor="middle" dominant-baseline="central" font-size="10.5" fill="#7e7e7e" letter-spacing="0.3" >6th Avenue</text><text x="1113" y="370" transform="rotate(-61 1113 370)" text-anchor="middle" dominant-baseline="central" font-size="10.5" fill="#7e7e7e" letter-spacing="0.3" >5th Avenue</text><text x="920" y="717" transform="rotate(-61 920 717)" text-anchor="middle" dominant-baseline="central" font-size="10.5" fill="#7e7e7e" letter-spacing="0.3" >5th Avenue</text><text x="1080" y="772" transform="rotate(-61 1080 772)" text-anchor="middle" dominant-baseline="central" font-size="10.5" fill="#7e7e7e" letter-spacing="0.3" >Madison Avenue</text></g>
<polygon points="481.8,322.7 1080.0,460.4 1080.0,561.9 371.0,593.5" fill="none" stroke="#2bbcc6" stroke-width="4.0" stroke-linejoin="miter"/>
<polygon points="483.0,325.0 1078.0,462.0 1078.0,560.0 374.0,591.4" fill="#2244a8"/>
<polygon points="483.0,325.0 1078.0,462.0 1078.0,560.0 374.0,591.4" fill="none" stroke="#b98a6a" stroke-width=".7"/>
<polygon points="484.6,328.0 1075.4,464.1 1075.4,557.5 377.9,588.6" fill="#3553a6"/>
<g font-family="Liberation Sans" opacity=".35"><text x="652" y="480" transform="rotate(-61 652 480)" text-anchor="middle" dominant-baseline="central" font-size="10.5" fill="#6a7ab8" letter-spacing="0.3" >6th Avenue</text><text x="1017" y="545" transform="rotate(-61 1017 545)" text-anchor="middle" dominant-baseline="central" font-size="10.5" fill="#6a7ab8" letter-spacing="0.3" >5th Avenue</text><text x="855" y="520" transform="rotate(29 855 520)" text-anchor="middle" dominant-baseline="central" font-size="12" fill="#6a7ab8" letter-spacing="2" >W 42nd St</text><text x="957" y="475" transform="rotate(29 957 475)" text-anchor="middle" dominant-baseline="central" font-size="10.5" fill="#6a7ab8" letter-spacing="0.3" >W 43rd St</text><text x="500" y="437" transform="rotate(29 500 437)" text-anchor="middle" dominant-baseline="central" font-size="10.5" fill="#6a7ab8" letter-spacing="0.3" >W 41st St</text><text x="580" y="437" transform="rotate(0 580 437)" text-anchor="middle" dominant-baseline="central" font-size="9" fill="#6a7ab8" letter-spacing="0.3" >VERIZON PLAZA</text><text x="760" y="564" transform="rotate(0 760 564)" text-anchor="middle" dominant-baseline="central" font-size="9" fill="#6a7ab8" letter-spacing="0.3" >BRYANT PARK</text></g>
<g font-family="Liberation Sans" font-weight="bold" font-size="12" fill="#9a9ea2" letter-spacing="3.2"><text x="693" y="778">CART</text></g>
<circle cx="746" cy="773.6" r="11" fill="#ffffff" fill-opacity=".35"/>
<circle cx="746" cy="773.6" r="4.2" fill="#9a9ea2"/>
</svg>
<!-- search -->
<div class="a" style="left:12.5px;top:15.5px;width:159px;height:31px;background:#f3f3f3;border-radius:4px;box-shadow:0 1px 2px rgba(0,0,0,.35),0 0 0 .5px rgba(0,0,0,.12)"></div>
<svg class="a" style="left:23px;top:22px" width="18" height="18" viewBox="0 0 18 18"><circle cx="8" cy="8" r="5.2" fill="none" stroke="#6b6e70" stroke-width="1.7"/><path d="M11.8 11.8l3 3" stroke="#6b6e70" stroke-width="1.8"/></svg>
<div class="t" style="left:50.5px;top:24.5px;font-size:14.2px;color:#9a9a9a">Search location</div>
<!-- info -->
<div class="a" style="left:747px;top:25.5px;width:32px;height:31.5px;background:#fff;border-radius:4px;box-shadow:0 1px 2px rgba(0,0,0,.22)"></div>
<svg class="a" style="left:754px;top:32px" width="18" height="18" viewBox="0 0 18 18"><circle cx="9" cy="9" r="6.8" fill="none" stroke="#6b6e70" stroke-width="1.4"/><path d="M9 8v4.4" stroke="#6b6e70" stroke-width="1.7"/><circle cx="9" cy="5.7" r="1" fill="#6b6e70"/></svg>
<!-- popup -->
<svg class="a" style="left:274px;top:250px" width="210" height="90" viewBox="598 356 210 90"><path d="M604 358.1h192a4 4 0 0 1 4 4v58.8a4 4 0 0 1-4 4H616.1L600 440.6V362.1a4 4 0 0 1 4-4z" fill="#fff"/></svg>
<div class="t" style="left:292.5px;top:268.5px;font-size:10.6px;color:#6f7274;letter-spacing:.1px">PERIMETER_METERS</div>
<div class="t" style="left:292px;top:283.5px;font-size:12.6px;color:#2c3032">1537.10</div>
<svg class="a" style="left:450px;top:259px" width="20" height="20" viewBox="0 0 20 20"><path d="M4.8 4.2l10.6 10.6M15.4 4.2L4.8 14.8" stroke="#6b6e70" stroke-width="1.5"/></svg>
<svg class="a" style="left:450px;top:293px" width="20" height="20" viewBox="0 0 20 20"><path d="M12.2 13.6L8.2 9.6l4-4" fill="none" stroke="#6b6e70" stroke-width="1.6"/></svg>
<!-- zoom -->
<div class="a" style="left:25px;top:572.5px;width:36px;height:108px;background:#fff;border-radius:4px;box-shadow:0 1px 2px rgba(0,0,0,.28)"></div>
<div class="a" style="left:25px;top:608px;width:36px;height:1px;background:#e8e8e8"></div>
<div class="a" style="left:25px;top:644px;width:36px;height:1px;background:#e8e8e8"></div>
<svg class="a" style="left:25px;top:572.5px" width="36" height="108" viewBox="0 0 36 108"><path d="M11.4 18h13.4M18.1 11.3v13.4M11.4 90.4h13.4" stroke="#2c3032" stroke-width="1.9"/></svg>
<div class="t" style="left:35.5px;top:620.5px;font-size:12px;color:#6f7274;font-weight:bold">16</div>
<!-- layers -->
<div class="a" style="left:755px;top:648px;width:32px;height:32px;background:#fff;border-radius:4px;box-shadow:0 1px 2px rgba(0,0,0,.28)"></div>
<svg class="a" style="left:755px;top:648px" width="32" height="32" viewBox="0 0 32 32"><path d="M16 9.1l6.6 5-6.6 5-6.6-5z" fill="none" stroke="#2c3032" stroke-width="1.5" stroke-linejoin="round"/><path d="M9.4 16.9l6.6 5 6.6-5" fill="none" stroke="#2c3032" stroke-width="1.5" stroke-linejoin="round"/></svg>
<!-- attribution -->
<div class="a" style="left:594px;top:681px;width:201px;height:15px;background:rgba(248,248,248,.75)"></div>
<div class="t" style="left:600px;top:683.5px;font-size:10.1px;color:#2e2e2e">© CARTO, © OpenStreetMap contributors</div>
</div>
<!-- MENU -->
<div class="menu"><div class="a" style="left:0;top:200px;width:148px;height:32px;background:#e4e6e6"></div><div class="mi" style="top:19px;margin-top:-2.3px">None</div><div class="mi" style="top:51px;margin-top:-2.3px">10k</div><div class="mi" style="top:83px;margin-top:-2.3px">12.3k</div><div class="mi" style="top:115px;margin-top:-2.3px">.01<svg width="12" height="8" viewBox="0 0 12 8" style="margin:0 5.5px 0 5.5px;vertical-align:1.5px"><path d="M0.5 4H9" stroke="#2c3032" stroke-width="1.25"/><path d="M7.6 1.3L11.6 4 7.6 6.7z" fill="#2c3032"/></svg>1.0%</div><div class="mi" style="top:147px;margin-top:-2.3px">.01<svg width="12" height="8" viewBox="0 0 12 8" style="margin:0 5.5px 0 5.5px;vertical-align:1.5px"><path d="M0.5 4H9" stroke="#2c3032" stroke-width="1.25"/><path d="M7.6 1.3L11.6 4 7.6 6.7z" fill="#2c3032"/></svg>1.00%</div><div class="mi" style="top:179px;margin-top:-2.3px">12.345<svg width="12" height="8" viewBox="0 0 12 8" style="margin:0 5.5px 0 5.5px;vertical-align:1.5px"><path d="M0.5 4H9" stroke="#2c3032" stroke-width="1.25"/><path d="M7.6 1.3L11.6 4 7.6 6.7z" fill="#2c3032"/></svg>12.35%</div><div class="mi" style="top:211px;margin-top:-2.3px">1.23</div><div class="mi" style="top:243px;margin-top:-2.3px">1.234</div><div class="mi" style="top:275px;margin-top:-2.3px">12345<svg width="12" height="8" viewBox="0 0 12 8" style="margin:0 5.5px 0 5.5px;vertical-align:1.5px"><path d="M0.5 4H9" stroke="#2c3032" stroke-width="1.25"/><path d="M7.6 1.3L11.6 4 7.6 6.7z" fill="#2c3032"/></svg>12350</div><div class="mi" style="top:307px;margin-top:-2.3px">12,345.432</div><div class="mi" style="top:339px;margin-top:-2.3px">+12,345.432</div><div class="mi" style="top:371px;margin-top:-2.3px">$12,345.43</div><div class="mi" style="top:403px;margin-top:-2.3px">0<span style="display:inline-block;width:1px;height:14px;background:#4a4d50;vertical-align:-2.5px;margin:0 6.5px 0 6.5px"></span>1</div><div class="mi" style="top:435px;margin-top:-2.3px">yes<span style="display:inline-block;width:1px;height:14px;background:#4a4d50;vertical-align:-2.5px;margin:0 7px 0 7px"></span>no</div></div>
<svg class="a" style="left:1117px;top:799px" width="20" height="20" viewBox="0 0 20 20"><path d="M20 8.5A11 11 0 0 1 8.5 20H20z" fill="#8a8a8a"/><path d="M19.2 8.5A10.6 10.6 0 0 1 8.5 19.4" fill="none" stroke="#1a1a1a" stroke-width="1.6"/></svg>
<svg class="a" style="left:0;top:809px" width="10" height="10" viewBox="0 0 10 10"><path d="M0 7.6q3 .6 5.4 2.4H0z" fill="#1a1a1a"/></svg>
</body></html>
